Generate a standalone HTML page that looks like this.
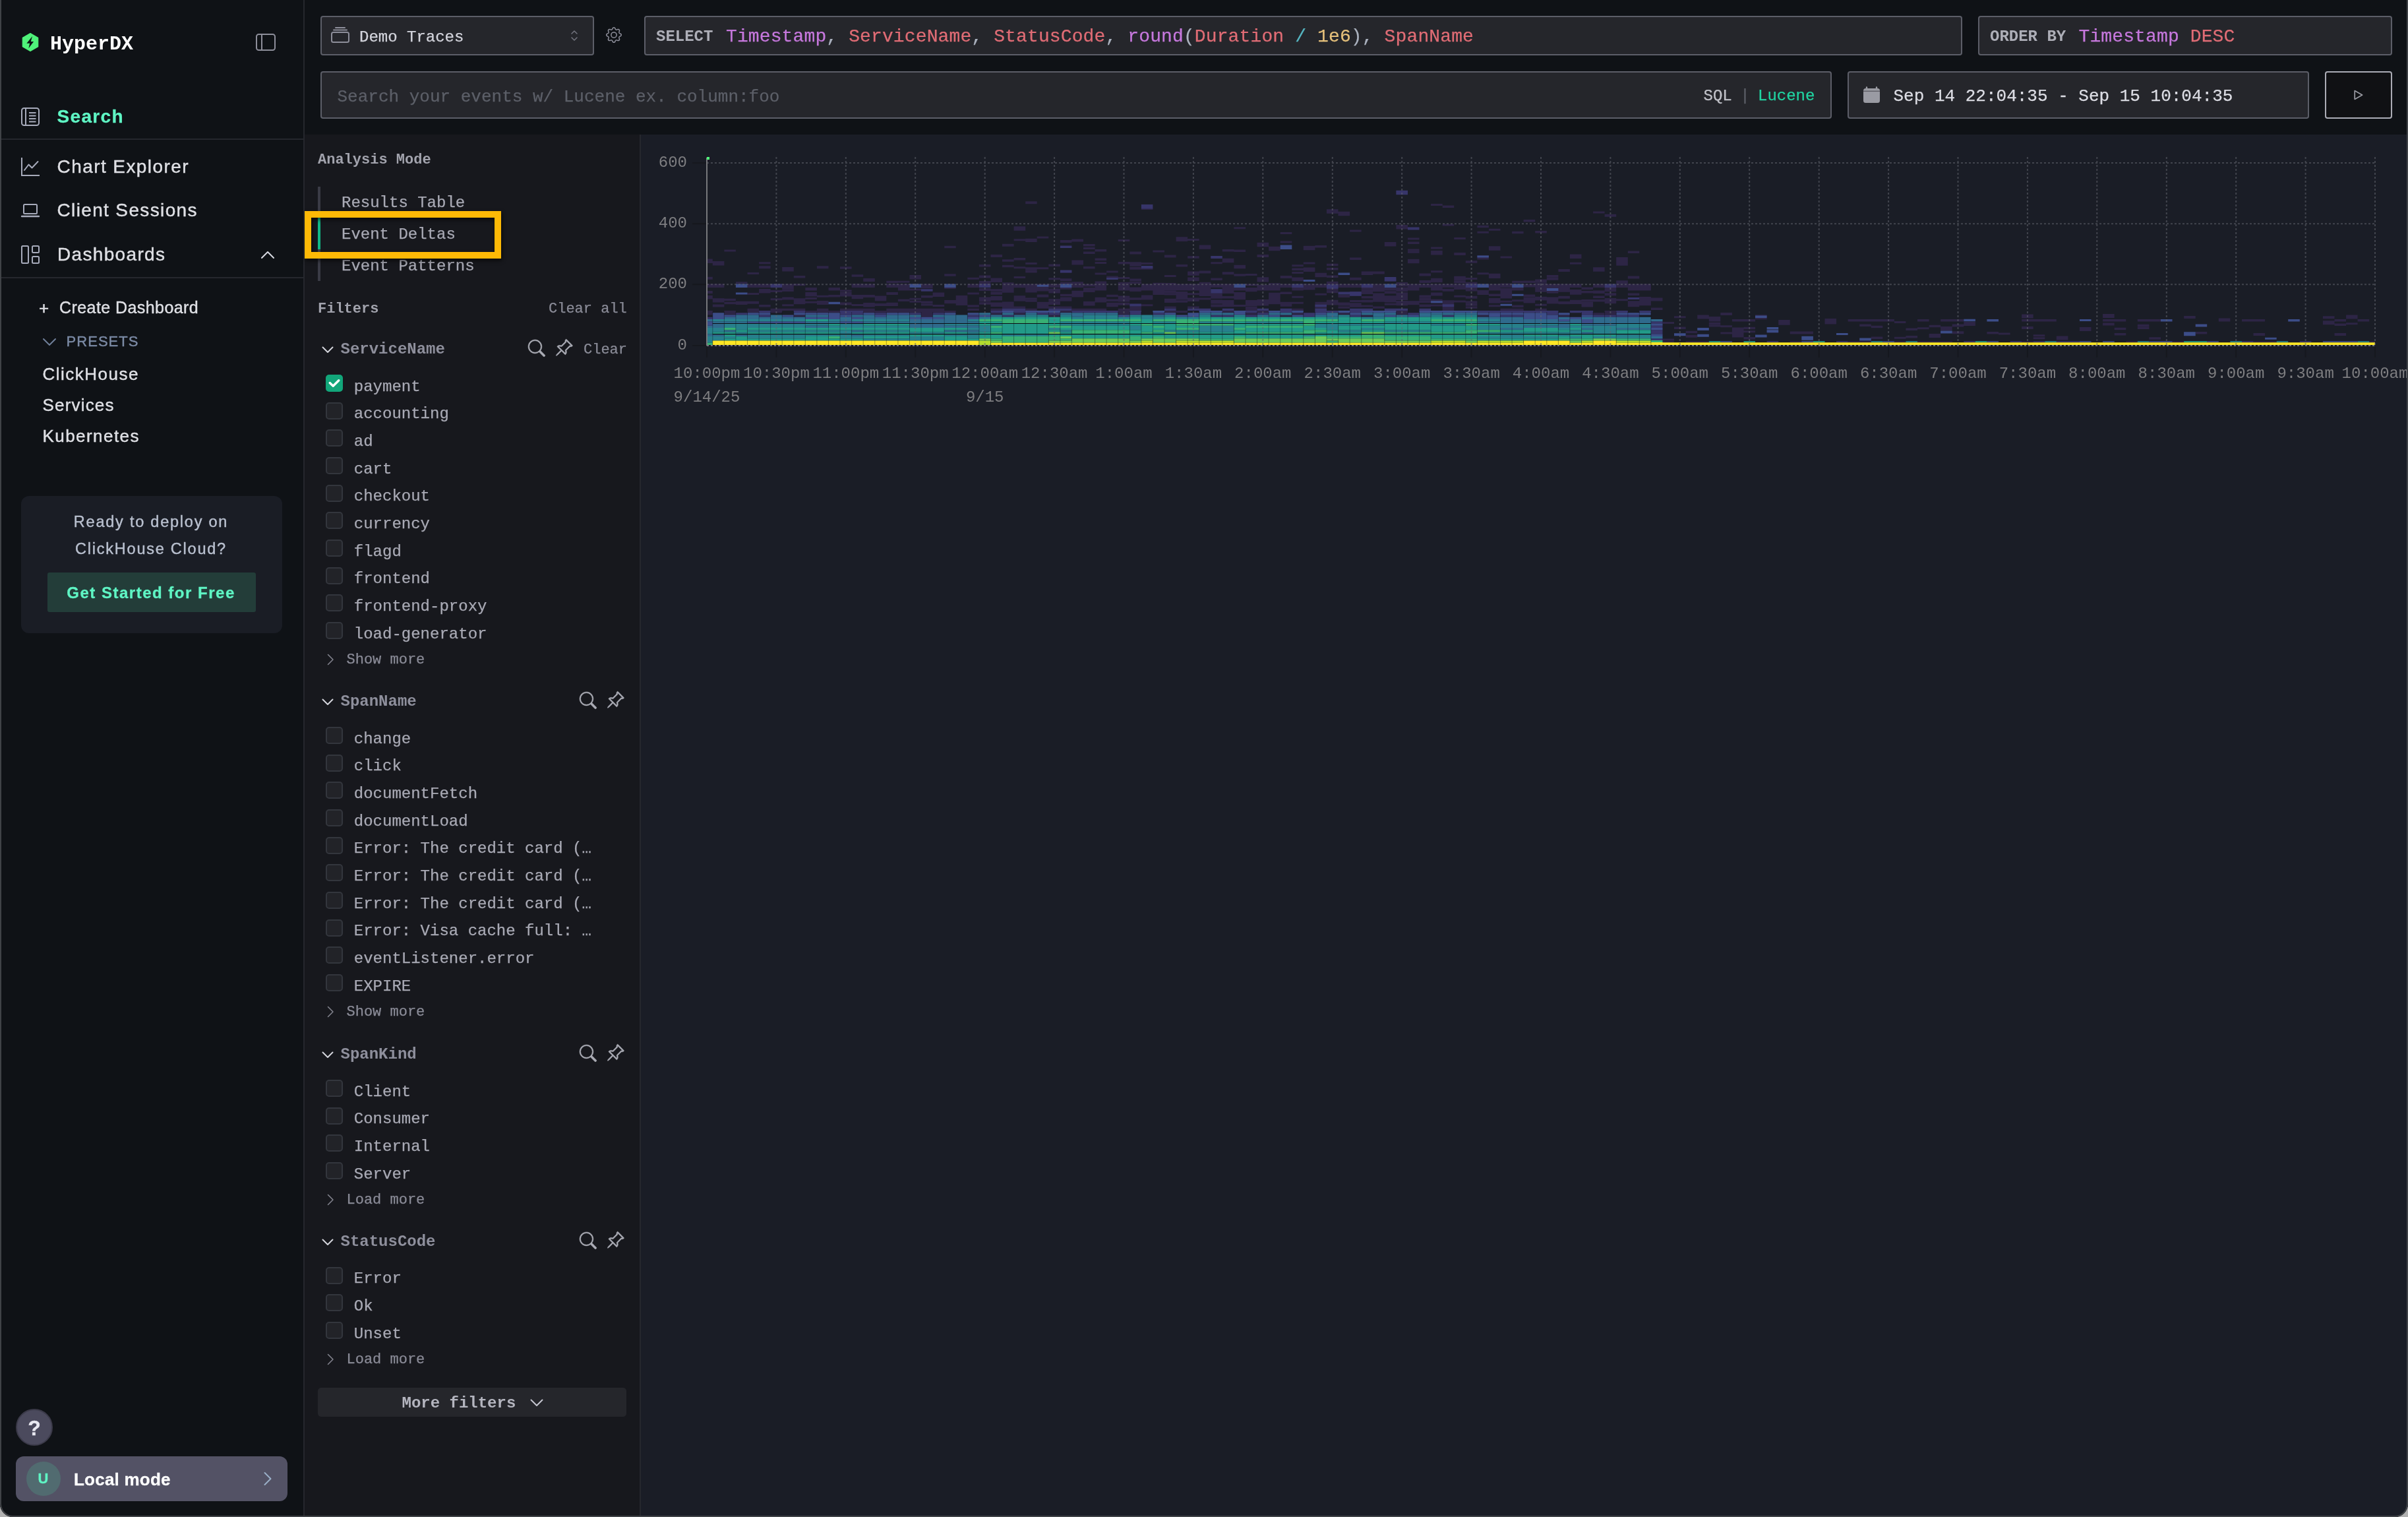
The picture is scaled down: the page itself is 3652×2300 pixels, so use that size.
<!DOCTYPE html><html lang="en"><head><meta charset="utf-8"><title>HyperDX Search</title><style>
*{box-sizing:border-box;margin:0;padding:0}
html,body{width:3652px;height:2300px;overflow:hidden;background:#b2b2b2}
#app{position:absolute;left:0;top:0;width:3652px;height:2300px;background:#1a1d26;overflow:hidden;border-radius:0 0 20px 20px}
#frame{position:absolute;left:0;top:-4px;width:3652px;height:2304px;border:2px solid #404347;border-bottom-width:2.5px;border-radius:0 0 20px 20px;pointer-events:none;z-index:50}
#app>div,#app>nav,#app>header,#app>aside,#app>main{position:absolute}
.t{position:absolute;white-space:pre}
.m{font-family:"Liberation Mono", monospace;-webkit-text-stroke:.25px currentColor}
.s{font-family:"Liberation Sans", sans-serif;-webkit-text-stroke:.4px currentColor}
.inp{background:#25262b;border:2px solid #5c5e68;border-radius:4px}
.cb{position:absolute;left:494px;width:26px;height:26px;border-radius:5px;background:#222328;border:2px solid #33363d}
.cb.on{background:#12a67a;border-color:#12a67a}
svg{overflow:visible}
.ly{position:absolute;left:0;top:0;width:10px;height:10px;will-change:transform}
</style></head><body><div id="app"><nav style="left:0;top:0;width:462px;height:2300px;background:#0f1216;border-right:2px solid #25272d"><div class="ly"><svg style="position:absolute;left:33px;top:50px;" width="26" height="28" viewBox="0 0 26 28"><path d="M13 0.6 L24.7 7.3 V20.7 L13 27.4 L1.3 20.7 V7.3 Z" fill="#4ff27a" stroke="#4ff27a" stroke-width="1.2" stroke-linejoin="round"/><path d="M16 4.9 L7.4 15.7 H12.1 L10.4 23.2 L18.1 13 H13.8 Z" fill="#0f1216"/></svg><span class="t m" style="top:51.52px;font-size:30px;line-height:30px;color:#ffffff;left:76.00px;font-weight:700;-webkit-text-stroke:0;">HyperDX</span><svg style="position:absolute;left:388px;top:51px;" width="30" height="26" viewBox="0 0 30 26"><rect x="1" y="1" width="28" height="24" rx="3.5" fill="none" stroke="#8d8e9a" stroke-width="2"/><path d="M9 1V25" stroke="#8d8e9a" stroke-width="2"/></svg><svg style="position:absolute;left:32px;top:163px;" width="28" height="28" viewBox="0 0 28 28"><rect x="1" y="1" width="26" height="26" rx="3.5" fill="none" stroke="#a7abbb" stroke-width="2"/><path d="M7 1V27 M12 8H22.5 M12 12.5H22.5 M12 17H22.5 M12 21.5H22.5" stroke="#a7abbb" stroke-width="2" fill="none"/></svg><span class="t s" style="top:163.30px;font-size:28px;line-height:28px;color:#5ff5c4;left:86.50px;font-weight:700;-webkit-text-stroke:.3px currentColor;letter-spacing:1.319px;">Search</span><div style="position:absolute;left:0px;top:210px;width:460px;height:2px;background:#25272d"></div><svg style="position:absolute;left:32px;top:239px;" width="28" height="28" viewBox="0 0 28 28"><path d="M1 0V27H28" stroke="#a7abbb" stroke-width="2" fill="none"/><path d="M5 19 L11.5 10.5 L16.5 15.5 L25.5 6" stroke="#a7abbb" stroke-width="2" fill="none" stroke-linejoin="round" stroke-linecap="round"/></svg><span class="t s" style="top:239.30px;font-size:28px;line-height:28px;color:#dfe0e5;left:86.50px;letter-spacing:1.422px;">Chart Explorer</span><svg style="position:absolute;left:32px;top:305px;" width="28" height="28" viewBox="0 0 28 28"><rect x="4" y="5" width="20" height="14" rx="1.5" fill="none" stroke="#a7abbb" stroke-width="2"/><path d="M1 23H27" stroke="#a7abbb" stroke-width="2.4" stroke-linecap="round"/></svg><span class="t s" style="top:305.30px;font-size:28px;line-height:28px;color:#dfe0e5;left:86.50px;letter-spacing:1.358px;">Client Sessions</span><svg style="position:absolute;left:32px;top:372px;" width="28" height="28" viewBox="0 0 28 28"><rect x="1" y="1" width="10" height="26" rx="1.5" fill="none" stroke="#a7abbb" stroke-width="2"/><rect x="17" y="1" width="10" height="10" rx="1.5" fill="none" stroke="#a7abbb" stroke-width="2"/><rect x="17" y="17" width="10" height="10" rx="1.5" fill="none" stroke="#a7abbb" stroke-width="2"/></svg><span class="t s" style="top:372.30px;font-size:28px;line-height:28px;color:#dfe0e5;left:87.00px;letter-spacing:1.335px;">Dashboards</span><svg style="position:absolute;left:396px;top:380px;" width="20" height="12" viewBox="0 0 20 12"><path d="M1 11 L10 2 L19 11" stroke="#d8dae2" stroke-width="2" fill="none" stroke-linecap="round" stroke-linejoin="round"/></svg><div style="position:absolute;left:0px;top:420px;width:460px;height:2px;background:#25272d"></div><span class="t s" style="top:453.99px;font-size:26px;line-height:26px;color:#dfe0e5;left:59.00px;">+</span><span class="t s" style="top:453.83px;font-size:25px;line-height:25px;color:#dfe0e5;left:90.00px;letter-spacing:0.430px;">Create Dashboard</span><svg style="position:absolute;left:65px;top:513px;" width="20" height="12" viewBox="0 0 20 12"><path d="M1 1 L10 10 L19 1" stroke="#6f7f99" stroke-width="2" fill="none" stroke-linecap="round" stroke-linejoin="round"/></svg><span class="t s" style="top:507.37px;font-size:22px;line-height:22px;color:#7c8ba6;left:100.50px;letter-spacing:1.049px;">PRESETS</span><span class="t s" style="top:553.99px;font-size:26px;line-height:26px;color:#dfe0e5;left:64.50px;letter-spacing:1.500px;">ClickHouse</span><span class="t s" style="top:600.99px;font-size:26px;line-height:26px;color:#dfe0e5;left:64.50px;letter-spacing:1.185px;">Services</span><span class="t s" style="top:648.49px;font-size:26px;line-height:26px;color:#dfe0e5;left:64.50px;letter-spacing:1.446px;">Kubernetes</span><div style="position:absolute;left:32px;top:752px;width:396px;height:208px;background:#1a1d25;border-radius:12px"></div><span class="t s" style="top:779.60px;font-size:23.5px;line-height:23.5px;color:#b9c0cf;left:229.00px;transform:translateX(-50%);letter-spacing:1.764px;">Ready to deploy on</span><span class="t s" style="top:821.10px;font-size:23.5px;line-height:23.5px;color:#b9c0cf;left:229.00px;transform:translateX(-50%);letter-spacing:1.760px;">ClickHouse Cloud?</span><div style="position:absolute;left:72px;top:868px;width:316px;height:60px;background:#233d39;border-radius:3px"></div><span class="t s" style="top:886.68px;font-size:24px;line-height:24px;color:#5ff5c4;left:229.00px;transform:translateX(-50%);font-weight:700;-webkit-text-stroke:.3px currentColor;letter-spacing:1.506px;">Get Started for Free</span><div style="position:absolute;left:24px;top:2136px;width:56px;height:56px;background:#4b4a5d;border-radius:50%;border:2px solid #3b3a49"></div><span class="t s" style="top:2148.91px;font-size:32px;line-height:32px;color:#e8e8f0;left:52.00px;transform:translateX(-50%);font-weight:700;-webkit-text-stroke:.3px currentColor;">?</span><div style="position:absolute;left:24px;top:2208px;width:412px;height:68px;background:#535265;border-radius:12px"></div><div style="position:absolute;left:39.5px;top:2216px;width:52px;height:52px;background:#516b70;border-radius:50%"></div><span class="t s" style="top:2231.37px;font-size:22px;line-height:22px;color:#5ff5c4;left:65.50px;transform:translateX(-50%);font-weight:700;-webkit-text-stroke:.3px currentColor;">U</span><span class="t s" style="top:2229.99px;font-size:26px;line-height:26px;color:#ffffff;left:112.00px;font-weight:700;-webkit-text-stroke:.3px currentColor;letter-spacing:0.224px;">Local mode</span><svg style="position:absolute;left:400px;top:2232px;" width="12" height="20" viewBox="0 0 12 20"><path d="M1.5 1 L10.5 10 L1.5 19" stroke="#9bb0c8" stroke-width="2" fill="none" stroke-linecap="round" stroke-linejoin="round"/></svg></div></nav><header style="left:462px;top:0;width:3190px;height:204px;background:#0f1216"><div class="ly" style="left:-462px;top:0"><div class="inp" style="position:absolute;left:486px;top:24px;width:415px;height:60px;"></div><svg style="position:absolute;left:502px;top:41px;" width="28" height="24" viewBox="0 0 28 24"><rect x="1" y="8" width="26" height="15" rx="2.5" fill="none" stroke="#8d8e9a" stroke-width="2"/><path d="M4 4.5H24 M7 1H21" stroke="#8d8e9a" stroke-width="2" stroke-linecap="round"/></svg><span class="t m" style="top:45.12px;font-size:24px;line-height:24px;color:#d3d4dc;left:545.00px;">Demo Traces</span><svg style="position:absolute;left:865px;top:45px;" width="12" height="18" viewBox="0 0 12 18"><path d="M2 6 L6 2 L10 6 M2 12 L6 16 L10 12" stroke="#73757f" stroke-width="1.5" fill="none" stroke-linecap="round" stroke-linejoin="round"/></svg><svg style="position:absolute;left:919px;top:40.5px;" width="24" height="24" viewBox="0 0 16 16"><g fill="#8d8e9a"><path d="M8 4.754a3.246 3.246 0 1 0 0 6.492 3.246 3.246 0 0 0 0-6.492zM5.754 8a2.246 2.246 0 1 1 4.492 0 2.246 2.246 0 0 1-4.492 0z"/><path d="M9.796 1.343c-.527-1.79-3.065-1.79-3.592 0l-.094.319a.873.873 0 0 1-1.255.52l-.292-.16c-1.64-.892-3.433.902-2.54 2.541l.159.292a.873.873 0 0 1-.52 1.255l-.319.094c-1.79.527-1.79 3.065 0 3.592l.319.094a.873.873 0 0 1 .52 1.255l-.16.292c-.892 1.64.901 3.434 2.541 2.54l.292-.159a.873.873 0 0 1 1.255.52l.094.319c.527 1.79 3.065 1.79 3.592 0l.094-.319a.873.873 0 0 1 1.255-.52l.292.16c1.64.893 3.434-.902 2.54-2.541l-.159-.292a.873.873 0 0 1 .52-1.255l.319-.094c1.79-.527 1.79-3.065 0-3.592l-.319-.094a.873.873 0 0 1-.52-1.255l.16-.292c.893-1.64-.902-3.433-2.541-2.54l-.292.159a.873.873 0 0 1-1.255-.52l-.094-.319zm-2.633.283c.246-.835 1.428-.835 1.674 0l.094.319a1.873 1.873 0 0 0 2.693 1.115l.291-.16c.764-.415 1.6.42 1.184 1.185l-.159.292a1.873 1.873 0 0 0 1.116 2.692l.318.094c.835.246.835 1.428 0 1.674l-.319.094a1.873 1.873 0 0 0-1.115 2.693l.16.291c.415.764-.42 1.6-1.185 1.184l-.291-.159a1.873 1.873 0 0 0-2.693 1.116l-.094.318c-.246.835-1.428.835-1.674 0l-.094-.319a1.873 1.873 0 0 0-2.692-1.115l-.292.16c-.764.415-1.6-.42-1.184-1.185l.159-.291A1.873 1.873 0 0 0 1.945 8.93l-.319-.094c-.835-.246-.835-1.428 0-1.674l.319-.094A1.873 1.873 0 0 0 3.06 4.377l-.16-.292c-.415-.764.42-1.6 1.185-1.184l.292.159a1.873 1.873 0 0 0 2.692-1.115l.094-.319z"/></g></svg><div class="inp" style="position:absolute;left:977px;top:24px;width:1999px;height:60px;"></div><span class="t m" style="top:44.12px;font-size:24px;line-height:24px;color:#adaeb7;left:995.00px;font-weight:700;-webkit-text-stroke:0;">SELECT</span><span class="t m" style="top:41.55px;font-size:28px;line-height:28px;color:#abb2bf;left:1101.00px;letter-spacing:0.120px;"><span style="color:#c678dd">Timestamp</span>, <span style="color:#e06c75">ServiceName</span>, <span style="color:#e06c75">StatusCode</span>, <span style="color:#c678dd">round</span>(<span style="color:#e06c75">Duration</span> <span style="color:#56b6c2">/</span> <span style="color:#e5c07b">1e6</span>), <span style="color:#e06c75">SpanName</span></span><div class="inp" style="position:absolute;left:3000px;top:24px;width:628px;height:60px;"></div><span class="t m" style="top:44.12px;font-size:24px;line-height:24px;color:#adaeb7;left:3018.00px;font-weight:700;-webkit-text-stroke:0;">ORDER BY</span><span class="t m" style="top:41.55px;font-size:28px;line-height:28px;color:#abb2bf;left:3152.50px;letter-spacing:0.120px;"><span style="color:#c678dd">Timestamp</span> <span style="color:#e06c75">DESC</span></span><div class="inp" style="position:absolute;left:486px;top:108px;width:2292px;height:71.5px;"></div><span class="t m" style="top:133.58px;font-size:26px;line-height:26px;color:#5c5f68;left:511.50px;">Search your events w/ Lucene ex. column:foo</span><span class="t m" style="top:134.12px;font-size:24px;line-height:24px;color:#c1c2c9;left:2583.50px;">SQL</span><span class="t m" style="top:134.12px;font-size:24px;line-height:24px;color:#5c5f68;left:2646.50px;transform:translateX(-50%);">|</span><span class="t m" style="top:134.12px;font-size:24px;line-height:24px;color:#20d4a1;left:2666.00px;">Lucene</span><div class="inp" style="position:absolute;left:2802px;top:108px;width:700px;height:71.5px;"></div><svg style="position:absolute;left:2825.5px;top:131.5px;" width="25" height="24" viewBox="0 0 25 24"><path d="M5 0.5V4 M20 0.5V4" stroke="#9a9ba3" stroke-width="2.4" stroke-linecap="round"/><rect x="0" y="2" width="25" height="22" rx="3.5" fill="#9a9ba3"/><rect x="0" y="5.6" width="25" height="1.3" fill="#25262b" opacity=".55"/></svg><span class="t m" style="top:132.58px;font-size:26px;line-height:26px;color:#dcdde4;left:2871.50px;">Sep 14 22:04:35 - Sep 15 10:04:35</span><div style="position:absolute;left:3526px;top:108px;width:102px;height:71.5px;background:#101114;border:2px solid #abacb6;border-radius:4px"></div><svg style="position:absolute;left:3570px;top:136px;" width="14" height="16" viewBox="0 0 14 16"><path d="M1.2 1.6 L12.6 8 L1.2 14.4 Z" fill="none" stroke="#9a9ba3" stroke-width="1.7" stroke-linejoin="round"/></svg></div></header><aside style="left:462px;top:204px;width:510px;height:2096px;background:#17181d;border-right:2px solid #26272d"><div class="ly" style="left:-462px;top:-204px"><span class="t m" style="top:231.65px;font-size:22px;line-height:22px;color:#a2a3ad;left:482.00px;font-weight:700;-webkit-text-stroke:0;">Analysis Mode</span><div style="position:absolute;left:482px;top:282.5px;width:4px;height:143.5px;background:#3a3b46"></div><span class="t m" style="top:295.62px;font-size:24px;line-height:24px;color:#a9aab5;left:518.00px;">Results Table</span><span class="t m" style="top:343.62px;font-size:24px;line-height:24px;color:#a9aab5;left:518.00px;">Event Deltas</span><span class="t m" style="top:391.62px;font-size:24px;line-height:24px;color:#a9aab5;left:518.00px;">Event Patterns</span><div style="position:absolute;left:482px;top:328px;width:4px;height:50px;background:#12b886"></div><div style="position:absolute;left:462px;top:320px;width:298px;height:71.5px;border:10px solid #fdb906;filter:drop-shadow(1px 3px 3px rgba(0,0,0,.65));z-index:5"></div><span class="t m" style="top:458.15px;font-size:22px;line-height:22px;color:#a2a3ad;left:482.00px;font-weight:700;-webkit-text-stroke:0;">Filters</span><span class="t m" style="top:458.15px;font-size:22px;line-height:22px;color:#8a8b97;left:832.00px;">Clear all</span><svg style="position:absolute;left:488px;top:525.0px;" width="18" height="11" viewBox="0 0 18 11"><path d="M1.5 1.5 L9 9 L16.5 1.5" stroke="#d4d5dc" stroke-width="2" fill="none" stroke-linecap="round" stroke-linejoin="round"/></svg><span class="t m" style="top:518.12px;font-size:24px;line-height:24px;color:#8e8f9c;left:516.50px;font-weight:700;-webkit-text-stroke:0;">ServiceName</span><svg style="position:absolute;left:801.2px;top:515.0px;" width="25.7" height="25.7" viewBox="0 0 16 16"><g fill="#abacb5" stroke="#abacb5" stroke-width=".35"><path d="M11.742 10.344a6.5 6.5 0 1 0-1.397 1.398h-.001c.03.04.062.078.098.115l3.85 3.85a1 1 0 0 0 1.415-1.414l-3.85-3.85a1.007 1.007 0 0 0-.115-.1zM12 6.5a5.5 5.5 0 1 1-11 0 5.5 5.5 0 0 1 11 0z"/></g></svg><svg style="position:absolute;left:840.6px;top:513.0px;" width="28.7" height="28.7" viewBox="0 0 16 16"><g fill="#abacb5" stroke="#abacb5" stroke-width=".3"><path d="M9.828.722a.5.5 0 0 1 .354.146l4.95 4.95a.5.5 0 0 1 0 .707c-.48.48-1.072.588-1.503.588-.177 0-.335-.018-.46-.039l-3.134 3.134a5.927 5.927 0 0 1 .16 1.013c.046.702-.032 1.687-.72 2.375a.5.5 0 0 1-.707 0l-2.829-2.828-3.182 3.182c-.195.195-1.219.902-1.414.707-.195-.195.512-1.22.707-1.414l3.182-3.182-2.828-2.829a.5.5 0 0 1 0-.707c.688-.688 1.673-.767 2.375-.72a5.922 5.922 0 0 1 1.013.16l3.134-3.133a2.772 2.772 0 0 1-.04-.461c0-.43.108-1.022.589-1.503a.5.5 0 0 1 .353-.146zm.122 2.112v-.002.002zm0-.002v.002a.5.5 0 0 1-.122.51L6.293 6.878a.5.5 0 0 1-.511.12H5.78l-.014-.004a4.507 4.507 0 0 0-.288-.076 4.922 4.922 0 0 0-.765-.116c-.422-.028-.836.008-1.175.15l5.51 5.509c.141-.34.177-.753.149-1.175a4.924 4.924 0 0 0-.192-1.054l-.004-.013v-.001a.5.5 0 0 1 .12-.512l3.536-3.535a.5.5 0 0 1 .532-.115l.096.022c.087.017.208.034.344.034.114 0 .23-.011.343-.04L9.927 2.028c-.029.113-.04.23-.04.343a1.779 1.779 0 0 0 .062.46z"/></g></svg><span class="t m" style="top:519.65px;font-size:22px;line-height:22px;color:#8a8b97;left:885.00px;">Clear</span><div class="cb on" style="top:568.00px"><svg width="26" height="26" viewBox="0 0 26 26" style="position:absolute;left:-2px;top:-2px"><path d="M6.2 12.6 L11.2 17.3 L19.8 8.7" stroke="#fff" stroke-width="3.4" fill="none" stroke-linecap="round" stroke-linejoin="round"/></svg></div><span class="t m" style="top:574.62px;font-size:24px;line-height:24px;color:#a9aab5;left:536.80px;">payment</span><div class="cb" style="top:609.67px"></div><span class="t m" style="top:616.29px;font-size:24px;line-height:24px;color:#a9aab5;left:536.80px;">accounting</span><div class="cb" style="top:651.34px"></div><span class="t m" style="top:657.96px;font-size:24px;line-height:24px;color:#a9aab5;left:536.80px;">ad</span><div class="cb" style="top:693.01px"></div><span class="t m" style="top:699.63px;font-size:24px;line-height:24px;color:#a9aab5;left:536.80px;">cart</span><div class="cb" style="top:734.68px"></div><span class="t m" style="top:741.30px;font-size:24px;line-height:24px;color:#a9aab5;left:536.80px;">checkout</span><div class="cb" style="top:776.35px"></div><span class="t m" style="top:782.97px;font-size:24px;line-height:24px;color:#a9aab5;left:536.80px;">currency</span><div class="cb" style="top:818.02px"></div><span class="t m" style="top:824.64px;font-size:24px;line-height:24px;color:#a9aab5;left:536.80px;">flagd</span><div class="cb" style="top:859.69px"></div><span class="t m" style="top:866.31px;font-size:24px;line-height:24px;color:#a9aab5;left:536.80px;">frontend</span><div class="cb" style="top:901.36px"></div><span class="t m" style="top:907.98px;font-size:24px;line-height:24px;color:#a9aab5;left:536.80px;">frontend-proxy</span><div class="cb" style="top:943.03px"></div><span class="t m" style="top:949.65px;font-size:24px;line-height:24px;color:#a9aab5;left:536.80px;">load-generator</span><svg style="position:absolute;left:496px;top:991.03px;" width="11" height="18" viewBox="0 0 11 18"><path d="M1.5 1.5 L9 9 L1.5 16.5" stroke="#84858f" stroke-width="1.5" fill="none" stroke-linecap="round" stroke-linejoin="round"/></svg><span class="t m" style="top:990.18px;font-size:22px;line-height:22px;color:#8a8b97;left:525.50px;">Show more</span><svg style="position:absolute;left:488px;top:1059.0px;" width="18" height="11" viewBox="0 0 18 11"><path d="M1.5 1.5 L9 9 L16.5 1.5" stroke="#d4d5dc" stroke-width="2" fill="none" stroke-linecap="round" stroke-linejoin="round"/></svg><span class="t m" style="top:1052.12px;font-size:24px;line-height:24px;color:#8e8f9c;left:516.50px;font-weight:700;-webkit-text-stroke:0;">SpanName</span><svg style="position:absolute;left:879.2px;top:1049.0px;" width="25.7" height="25.7" viewBox="0 0 16 16"><g fill="#abacb5" stroke="#abacb5" stroke-width=".35"><path d="M11.742 10.344a6.5 6.5 0 1 0-1.397 1.398h-.001c.03.04.062.078.098.115l3.85 3.85a1 1 0 0 0 1.415-1.414l-3.85-3.85a1.007 1.007 0 0 0-.115-.1zM12 6.5a5.5 5.5 0 1 1-11 0 5.5 5.5 0 0 1 11 0z"/></g></svg><svg style="position:absolute;left:918.6px;top:1047.0px;" width="28.7" height="28.7" viewBox="0 0 16 16"><g fill="#abacb5" stroke="#abacb5" stroke-width=".3"><path d="M9.828.722a.5.5 0 0 1 .354.146l4.95 4.95a.5.5 0 0 1 0 .707c-.48.48-1.072.588-1.503.588-.177 0-.335-.018-.46-.039l-3.134 3.134a5.927 5.927 0 0 1 .16 1.013c.046.702-.032 1.687-.72 2.375a.5.5 0 0 1-.707 0l-2.829-2.828-3.182 3.182c-.195.195-1.219.902-1.414.707-.195-.195.512-1.22.707-1.414l3.182-3.182-2.828-2.829a.5.5 0 0 1 0-.707c.688-.688 1.673-.767 2.375-.72a5.922 5.922 0 0 1 1.013.16l3.134-3.133a2.772 2.772 0 0 1-.04-.461c0-.43.108-1.022.589-1.503a.5.5 0 0 1 .353-.146zm.122 2.112v-.002.002zm0-.002v.002a.5.5 0 0 1-.122.51L6.293 6.878a.5.5 0 0 1-.511.12H5.78l-.014-.004a4.507 4.507 0 0 0-.288-.076 4.922 4.922 0 0 0-.765-.116c-.422-.028-.836.008-1.175.15l5.51 5.509c.141-.34.177-.753.149-1.175a4.924 4.924 0 0 0-.192-1.054l-.004-.013v-.001a.5.5 0 0 1 .12-.512l3.536-3.535a.5.5 0 0 1 .532-.115l.096.022c.087.017.208.034.344.034.114 0 .23-.011.343-.04L9.927 2.028c-.029.113-.04.23-.04.343a1.779 1.779 0 0 0 .062.46z"/></g></svg><div class="cb" style="top:1102.00px"></div><span class="t m" style="top:1108.62px;font-size:24px;line-height:24px;color:#a9aab5;left:536.80px;">change</span><div class="cb" style="top:1143.67px"></div><span class="t m" style="top:1150.29px;font-size:24px;line-height:24px;color:#a9aab5;left:536.80px;">click</span><div class="cb" style="top:1185.34px"></div><span class="t m" style="top:1191.96px;font-size:24px;line-height:24px;color:#a9aab5;left:536.80px;">documentFetch</span><div class="cb" style="top:1227.01px"></div><span class="t m" style="top:1233.63px;font-size:24px;line-height:24px;color:#a9aab5;left:536.80px;">documentLoad</span><div class="cb" style="top:1268.68px"></div><span class="t m" style="top:1275.30px;font-size:24px;line-height:24px;color:#a9aab5;left:536.80px;">Error: The credit card (…</span><div class="cb" style="top:1310.35px"></div><span class="t m" style="top:1316.97px;font-size:24px;line-height:24px;color:#a9aab5;left:536.80px;">Error: The credit card (…</span><div class="cb" style="top:1352.02px"></div><span class="t m" style="top:1358.64px;font-size:24px;line-height:24px;color:#a9aab5;left:536.80px;">Error: The credit card (…</span><div class="cb" style="top:1393.69px"></div><span class="t m" style="top:1400.31px;font-size:24px;line-height:24px;color:#a9aab5;left:536.80px;">Error: Visa cache full: …</span><div class="cb" style="top:1435.36px"></div><span class="t m" style="top:1441.98px;font-size:24px;line-height:24px;color:#a9aab5;left:536.80px;">eventListener.error</span><div class="cb" style="top:1477.03px"></div><span class="t m" style="top:1483.65px;font-size:24px;line-height:24px;color:#a9aab5;left:536.80px;">EXPIRE</span><svg style="position:absolute;left:496px;top:1525.03px;" width="11" height="18" viewBox="0 0 11 18"><path d="M1.5 1.5 L9 9 L1.5 16.5" stroke="#84858f" stroke-width="1.5" fill="none" stroke-linecap="round" stroke-linejoin="round"/></svg><span class="t m" style="top:1524.18px;font-size:22px;line-height:22px;color:#8a8b97;left:525.50px;">Show more</span><svg style="position:absolute;left:488px;top:1594.0px;" width="18" height="11" viewBox="0 0 18 11"><path d="M1.5 1.5 L9 9 L16.5 1.5" stroke="#d4d5dc" stroke-width="2" fill="none" stroke-linecap="round" stroke-linejoin="round"/></svg><span class="t m" style="top:1587.12px;font-size:24px;line-height:24px;color:#8e8f9c;left:516.50px;font-weight:700;-webkit-text-stroke:0;">SpanKind</span><svg style="position:absolute;left:879.2px;top:1584.0px;" width="25.7" height="25.7" viewBox="0 0 16 16"><g fill="#abacb5" stroke="#abacb5" stroke-width=".35"><path d="M11.742 10.344a6.5 6.5 0 1 0-1.397 1.398h-.001c.03.04.062.078.098.115l3.85 3.85a1 1 0 0 0 1.415-1.414l-3.85-3.85a1.007 1.007 0 0 0-.115-.1zM12 6.5a5.5 5.5 0 1 1-11 0 5.5 5.5 0 0 1 11 0z"/></g></svg><svg style="position:absolute;left:918.6px;top:1582.0px;" width="28.7" height="28.7" viewBox="0 0 16 16"><g fill="#abacb5" stroke="#abacb5" stroke-width=".3"><path d="M9.828.722a.5.5 0 0 1 .354.146l4.95 4.95a.5.5 0 0 1 0 .707c-.48.48-1.072.588-1.503.588-.177 0-.335-.018-.46-.039l-3.134 3.134a5.927 5.927 0 0 1 .16 1.013c.046.702-.032 1.687-.72 2.375a.5.5 0 0 1-.707 0l-2.829-2.828-3.182 3.182c-.195.195-1.219.902-1.414.707-.195-.195.512-1.22.707-1.414l3.182-3.182-2.828-2.829a.5.5 0 0 1 0-.707c.688-.688 1.673-.767 2.375-.72a5.922 5.922 0 0 1 1.013.16l3.134-3.133a2.772 2.772 0 0 1-.04-.461c0-.43.108-1.022.589-1.503a.5.5 0 0 1 .353-.146zm.122 2.112v-.002.002zm0-.002v.002a.5.5 0 0 1-.122.51L6.293 6.878a.5.5 0 0 1-.511.12H5.78l-.014-.004a4.507 4.507 0 0 0-.288-.076 4.922 4.922 0 0 0-.765-.116c-.422-.028-.836.008-1.175.15l5.51 5.509c.141-.34.177-.753.149-1.175a4.924 4.924 0 0 0-.192-1.054l-.004-.013v-.001a.5.5 0 0 1 .12-.512l3.536-3.535a.5.5 0 0 1 .532-.115l.096.022c.087.017.208.034.344.034.114 0 .23-.011.343-.04L9.927 2.028c-.029.113-.04.23-.04.343a1.779 1.779 0 0 0 .062.46z"/></g></svg><div class="cb" style="top:1637.00px"></div><span class="t m" style="top:1643.62px;font-size:24px;line-height:24px;color:#a9aab5;left:536.80px;">Client</span><div class="cb" style="top:1678.67px"></div><span class="t m" style="top:1685.29px;font-size:24px;line-height:24px;color:#a9aab5;left:536.80px;">Consumer</span><div class="cb" style="top:1720.34px"></div><span class="t m" style="top:1726.96px;font-size:24px;line-height:24px;color:#a9aab5;left:536.80px;">Internal</span><div class="cb" style="top:1762.01px"></div><span class="t m" style="top:1768.63px;font-size:24px;line-height:24px;color:#a9aab5;left:536.80px;">Server</span><svg style="position:absolute;left:496px;top:1810.01px;" width="11" height="18" viewBox="0 0 11 18"><path d="M1.5 1.5 L9 9 L1.5 16.5" stroke="#84858f" stroke-width="1.5" fill="none" stroke-linecap="round" stroke-linejoin="round"/></svg><span class="t m" style="top:1809.16px;font-size:22px;line-height:22px;color:#8a8b97;left:525.50px;">Load more</span><svg style="position:absolute;left:488px;top:1877.8px;" width="18" height="11" viewBox="0 0 18 11"><path d="M1.5 1.5 L9 9 L16.5 1.5" stroke="#d4d5dc" stroke-width="2" fill="none" stroke-linecap="round" stroke-linejoin="round"/></svg><span class="t m" style="top:1870.92px;font-size:24px;line-height:24px;color:#8e8f9c;left:516.50px;font-weight:700;-webkit-text-stroke:0;">StatusCode</span><svg style="position:absolute;left:879.2px;top:1867.8px;" width="25.7" height="25.7" viewBox="0 0 16 16"><g fill="#abacb5" stroke="#abacb5" stroke-width=".35"><path d="M11.742 10.344a6.5 6.5 0 1 0-1.397 1.398h-.001c.03.04.062.078.098.115l3.85 3.85a1 1 0 0 0 1.415-1.414l-3.85-3.85a1.007 1.007 0 0 0-.115-.1zM12 6.5a5.5 5.5 0 1 1-11 0 5.5 5.5 0 0 1 11 0z"/></g></svg><svg style="position:absolute;left:918.6px;top:1865.8px;" width="28.7" height="28.7" viewBox="0 0 16 16"><g fill="#abacb5" stroke="#abacb5" stroke-width=".3"><path d="M9.828.722a.5.5 0 0 1 .354.146l4.95 4.95a.5.5 0 0 1 0 .707c-.48.48-1.072.588-1.503.588-.177 0-.335-.018-.46-.039l-3.134 3.134a5.927 5.927 0 0 1 .16 1.013c.046.702-.032 1.687-.72 2.375a.5.5 0 0 1-.707 0l-2.829-2.828-3.182 3.182c-.195.195-1.219.902-1.414.707-.195-.195.512-1.22.707-1.414l3.182-3.182-2.828-2.829a.5.5 0 0 1 0-.707c.688-.688 1.673-.767 2.375-.72a5.922 5.922 0 0 1 1.013.16l3.134-3.133a2.772 2.772 0 0 1-.04-.461c0-.43.108-1.022.589-1.503a.5.5 0 0 1 .353-.146zm.122 2.112v-.002.002zm0-.002v.002a.5.5 0 0 1-.122.51L6.293 6.878a.5.5 0 0 1-.511.12H5.78l-.014-.004a4.507 4.507 0 0 0-.288-.076 4.922 4.922 0 0 0-.765-.116c-.422-.028-.836.008-1.175.15l5.51 5.509c.141-.34.177-.753.149-1.175a4.924 4.924 0 0 0-.192-1.054l-.004-.013v-.001a.5.5 0 0 1 .12-.512l3.536-3.535a.5.5 0 0 1 .532-.115l.096.022c.087.017.208.034.344.034.114 0 .23-.011.343-.04L9.927 2.028c-.029.113-.04.23-.04.343a1.779 1.779 0 0 0 .062.46z"/></g></svg><div class="cb" style="top:1920.80px"></div><span class="t m" style="top:1927.42px;font-size:24px;line-height:24px;color:#a9aab5;left:536.80px;">Error</span><div class="cb" style="top:1962.47px"></div><span class="t m" style="top:1969.09px;font-size:24px;line-height:24px;color:#a9aab5;left:536.80px;">Ok</span><div class="cb" style="top:2004.14px"></div><span class="t m" style="top:2010.76px;font-size:24px;line-height:24px;color:#a9aab5;left:536.80px;">Unset</span><svg style="position:absolute;left:496px;top:2052.14px;" width="11" height="18" viewBox="0 0 11 18"><path d="M1.5 1.5 L9 9 L1.5 16.5" stroke="#84858f" stroke-width="1.5" fill="none" stroke-linecap="round" stroke-linejoin="round"/></svg><span class="t m" style="top:2051.29px;font-size:22px;line-height:22px;color:#8a8b97;left:525.50px;">Load more</span><div style="position:absolute;left:482px;top:2104px;width:468px;height:44px;background:#25262b;border-radius:5px"></div><span class="t m" style="top:2116.12px;font-size:24px;line-height:24px;color:#b4b5bf;left:609.50px;font-weight:700;-webkit-text-stroke:0;">More filters</span><svg style="position:absolute;left:804px;top:2121px;" width="20" height="12" viewBox="0 0 20 12"><path d="M1.5 1.5 L10 10 L18.5 1.5" stroke="#c5c6d0" stroke-width="2" fill="none" stroke-linecap="round" stroke-linejoin="round"/></svg></div></aside><main style="left:972px;top:204px;width:2680px;height:2096px;background:#1a1d26"><svg style="position:absolute;left:0;top:0;will-change:transform" width="2680" height="500" viewBox="972 204 2680 500"><path fill="#2d2545" d="M1072.0 474.2H1080.8V477.5H1072.0zM1072.0 471.0H1080.8V474.2H1072.0zM1072.0 392.6H1080.8V399.1H1072.0zM1072.0 441.0H1080.8V445.0H1072.0zM1072.0 448.0H1080.8V451.0H1072.0zM1072.0 419.7H1080.8V423.7H1072.0zM1072.0 450.0H1080.8V453.5H1072.0zM1072.0 430.5H1080.8V436.0H1072.0zM1080.8 455.4H1098.4V458.4H1080.8zM1080.8 461.4H1098.4V465.4H1080.8zM1080.8 452.3H1098.4V455.8H1080.8zM1080.8 396.1H1098.4V402.6H1080.8zM1080.8 430.5H1098.4V436.0H1080.8zM1098.4 474.2H1115.9V477.5H1098.4zM1098.4 471.0H1115.9V474.2H1098.4zM1098.4 378.6H1115.9V381.6H1098.4zM1098.4 452.8H1115.9V456.3H1098.4zM1098.4 457.7H1115.9V461.2H1098.4zM1115.9 427.3H1133.5V430.3H1115.9zM1115.9 459.0H1133.5V462.0H1115.9zM1115.9 456.8H1133.5V460.8H1115.9zM1133.5 471.0H1151.1V474.2H1133.5zM1133.5 467.8H1151.1V471.0H1133.5zM1133.5 456.8H1151.1V460.8H1133.5zM1133.5 443.9H1151.1V446.9H1133.5zM1133.5 413.1H1151.1V416.1H1133.5zM1133.5 430.5H1151.1V436.0H1133.5zM1151.1 438.1H1168.6V444.6H1151.1zM1151.1 403.3H1168.6V407.3H1151.1zM1151.1 462.1H1168.6V465.6H1151.1zM1151.1 397.2H1168.6V400.2H1151.1zM1151.1 430.5H1168.6V436.0H1151.1zM1168.6 471.0H1186.2V474.2H1168.6zM1168.6 467.8H1186.2V471.0H1168.6zM1168.6 431.0H1186.2V434.5H1168.6zM1168.6 439.9H1186.2V442.9H1168.6zM1168.6 452.2H1186.2V455.2H1168.6zM1186.2 467.8H1203.8V471.0H1186.2zM1186.2 405.1H1203.8V411.6H1186.2zM1186.2 450.4H1203.8V454.4H1186.2zM1186.2 435.3H1203.8V438.3H1186.2zM1186.2 461.2H1203.8V464.2H1186.2zM1186.2 438.5H1203.8V442.0H1186.2zM1186.2 430.5H1203.8V436.0H1186.2zM1203.8 477.5H1221.3V480.8H1203.8zM1203.8 467.8H1221.3V471.0H1203.8zM1203.8 418.0H1221.3V421.5H1203.8zM1203.8 453.7H1221.3V460.2H1203.8zM1203.8 430.2H1221.3V433.2H1203.8zM1203.8 452.3H1221.3V456.3H1203.8zM1203.8 458.3H1221.3V461.3H1203.8zM1221.3 471.0H1238.9V474.2H1221.3zM1221.3 445.6H1238.9V449.1H1221.3zM1221.3 442.9H1238.9V449.4H1221.3zM1221.3 450.9H1238.9V453.9H1221.3zM1221.3 456.8H1238.9V459.8H1221.3zM1221.3 436.0H1238.9V440.5H1221.3zM1238.9 471.0H1256.5V474.2H1238.9zM1238.9 467.8H1256.5V471.0H1238.9zM1238.9 459.1H1256.5V462.1H1238.9zM1238.9 447.7H1256.5V450.7H1238.9zM1238.9 456.1H1256.5V459.6H1238.9zM1238.9 403.3H1256.5V407.3H1238.9zM1256.5 471.0H1274.0V474.2H1256.5zM1256.5 447.1H1274.0V450.6H1256.5zM1256.5 436.0H1274.0V440.5H1256.5zM1274.0 467.8H1291.6V471.0H1274.0zM1274.0 404.2H1291.6V407.7H1274.0zM1274.0 439.6H1291.6V442.6H1274.0zM1274.0 443.1H1291.6V449.6H1274.0zM1274.0 458.4H1291.6V462.4H1274.0zM1274.0 446.1H1291.6V449.6H1274.0zM1291.6 467.8H1309.2V471.0H1291.6zM1291.6 461.0H1309.2V464.0H1291.6zM1291.6 447.0H1309.2V450.5H1291.6zM1291.6 430.3H1309.2V433.8H1291.6zM1291.6 450.2H1309.2V453.2H1291.6zM1291.6 416.3H1309.2V419.8H1291.6zM1291.6 430.5H1309.2V436.0H1291.6zM1309.2 471.0H1326.8V474.2H1309.2zM1309.2 467.8H1326.8V471.0H1309.2zM1309.2 459.0H1326.8V465.5H1309.2zM1309.2 447.9H1326.8V450.9H1309.2zM1309.2 422.1H1326.8V426.1H1309.2zM1309.2 446.9H1326.8V450.9H1309.2zM1309.2 424.1H1326.8V427.1H1309.2zM1309.2 430.5H1326.8V436.0H1309.2zM1326.8 471.0H1344.3V474.2H1326.8zM1326.8 452.7H1344.3V456.2H1326.8zM1326.8 448.5H1344.3V455.0H1326.8zM1326.8 449.2H1344.3V455.7H1326.8zM1326.8 460.0H1344.3V464.0H1326.8zM1344.3 471.0H1361.9V474.2H1344.3zM1344.3 467.8H1361.9V471.0H1344.3zM1344.3 460.8H1361.9V463.8H1344.3zM1344.3 443.0H1361.9V447.0H1344.3zM1344.3 458.8H1361.9V461.8H1344.3zM1344.3 425.8H1361.9V429.3H1344.3zM1344.3 461.0H1361.9V464.0H1344.3zM1344.3 430.5H1361.9V436.0H1344.3zM1361.9 471.0H1379.5V474.2H1361.9zM1361.9 467.8H1379.5V471.0H1361.9zM1361.9 425.8H1379.5V428.8H1361.9zM1361.9 453.6H1379.5V457.1H1361.9zM1361.9 430.5H1379.5V436.0H1361.9zM1361.9 436.0H1379.5V440.5H1361.9zM1379.5 471.0H1397.0V474.2H1379.5zM1379.5 467.8H1397.0V471.0H1379.5zM1379.5 417.1H1397.0V423.6H1379.5zM1379.5 451.7H1397.0V454.7H1379.5zM1379.5 437.4H1397.0V440.4H1379.5zM1379.5 455.8H1397.0V458.8H1379.5zM1397.0 477.5H1414.6V480.8H1397.0zM1397.0 474.2H1414.6V477.5H1397.0zM1397.0 471.0H1414.6V474.2H1397.0zM1397.0 467.8H1414.6V471.0H1397.0zM1397.0 448.0H1414.6V451.5H1397.0zM1397.0 460.6H1414.6V463.6H1397.0zM1397.0 456.6H1414.6V460.1H1397.0zM1397.0 430.8H1414.6V437.3H1397.0zM1397.0 430.5H1414.6V436.0H1397.0zM1414.6 471.0H1432.2V474.2H1414.6zM1414.6 467.8H1432.2V471.0H1414.6zM1414.6 443.6H1432.2V450.1H1414.6zM1414.6 462.1H1432.2V465.1H1414.6zM1432.2 471.0H1449.7V474.2H1432.2zM1432.2 434.4H1449.7V437.9H1432.2zM1432.2 454.9H1449.7V458.4H1432.2zM1432.2 372.7H1449.7V376.2H1432.2zM1432.2 415.3H1449.7V418.8H1432.2zM1432.2 457.2H1449.7V460.2H1432.2zM1449.7 448.0H1467.3V451.0H1449.7zM1449.7 459.5H1467.3V463.0H1449.7zM1449.7 455.9H1467.3V459.9H1449.7zM1449.7 450.4H1467.3V456.9H1449.7zM1467.3 467.8H1484.9V471.0H1467.3zM1467.3 420.8H1484.9V423.8H1467.3zM1467.3 462.3H1484.9V465.8H1467.3zM1467.3 443.5H1484.9V446.5H1467.3zM1467.3 430.5H1484.9V436.0H1467.3zM1484.9 437.1H1502.5V441.1H1484.9zM1484.9 401.0H1502.5V404.5H1484.9zM1484.9 450.5H1502.5V453.5H1484.9zM1484.9 417.5H1502.5V421.5H1484.9zM1484.9 426.1H1502.5V432.6H1484.9zM1484.9 451.0H1502.5V457.5H1484.9zM1484.9 458.2H1502.5V461.7H1484.9zM1502.5 474.2H1520.0V477.5H1502.5zM1502.5 467.8H1520.0V471.0H1502.5zM1502.5 421.6H1520.0V428.1H1502.5zM1502.5 438.3H1520.0V441.8H1502.5zM1502.5 449.0H1520.0V455.5H1502.5zM1502.5 450.5H1520.0V454.0H1502.5zM1502.5 458.5H1520.0V465.0H1502.5zM1502.5 442.4H1520.0V445.4H1502.5zM1502.5 443.2H1520.0V446.7H1502.5zM1502.5 386.0H1520.0V390.0H1502.5zM1502.5 458.6H1520.0V462.1H1502.5zM1502.5 449.1H1520.0V452.1H1502.5zM1502.5 460.5H1520.0V463.5H1502.5zM1520.0 464.6H1537.6V467.8H1520.0zM1520.0 401.7H1537.6V405.2H1520.0zM1520.0 393.3H1537.6V396.8H1520.0zM1520.0 433.4H1537.6V437.4H1520.0zM1520.0 458.8H1537.6V462.8H1520.0zM1520.0 437.3H1537.6V443.8H1520.0zM1520.0 462.3H1537.6V465.8H1520.0zM1520.0 369.8H1537.6V373.8H1520.0zM1520.0 428.3H1537.6V434.8H1520.0zM1520.0 457.6H1537.6V461.1H1520.0zM1520.0 430.5H1537.6V436.0H1520.0zM1537.6 474.2H1555.2V477.5H1537.6zM1537.6 464.6H1555.2V467.8H1537.6zM1537.6 419.1H1555.2V422.1H1537.6zM1537.6 404.2H1555.2V407.2H1537.6zM1537.6 362.2H1555.2V365.2H1537.6zM1537.6 453.3H1555.2V456.8H1537.6zM1537.6 448.2H1555.2V454.7H1537.6zM1537.6 432.7H1555.2V436.2H1537.6zM1537.6 449.1H1555.2V452.1H1537.6zM1537.6 343.2H1555.2V349.7H1537.6zM1537.6 391.1H1555.2V394.6H1537.6zM1537.6 430.5H1555.2V436.0H1537.6zM1555.2 467.8H1572.7V471.0H1555.2zM1555.2 305.3H1572.7V309.3H1555.2zM1555.2 397.9H1572.7V400.9H1555.2zM1555.2 451.6H1572.7V454.6H1555.2zM1555.2 363.5H1572.7V367.0H1555.2zM1555.2 409.5H1572.7V413.5H1555.2zM1555.2 439.9H1572.7V443.4H1555.2zM1555.2 361.7H1572.7V365.7H1555.2zM1555.2 405.2H1572.7V409.2H1555.2zM1555.2 430.9H1572.7V433.9H1555.2zM1555.2 454.8H1572.7V457.8H1555.2zM1555.2 430.5H1572.7V436.0H1555.2zM1555.2 436.0H1572.7V440.5H1555.2zM1572.7 464.6H1590.3V467.8H1572.7zM1572.7 447.8H1590.3V450.8H1572.7zM1572.7 358.6H1590.3V361.6H1572.7zM1572.7 438.6H1590.3V441.6H1572.7zM1572.7 446.5H1590.3V450.0H1572.7zM1572.7 447.2H1590.3V450.7H1572.7zM1572.7 460.1H1590.3V463.1H1572.7zM1572.7 457.8H1590.3V461.3H1572.7zM1572.7 405.3H1590.3V408.3H1572.7zM1572.7 462.0H1590.3V465.5H1572.7zM1572.7 435.4H1590.3V438.9H1572.7zM1572.7 430.5H1590.3V436.0H1572.7zM1590.3 477.5H1607.9V480.8H1590.3zM1590.3 464.6H1607.9V467.8H1590.3zM1590.3 437.6H1607.9V441.1H1590.3zM1590.3 456.6H1607.9V459.6H1590.3zM1590.3 421.2H1607.9V424.2H1590.3zM1590.3 440.9H1607.9V444.4H1590.3zM1590.3 459.0H1607.9V462.0H1590.3zM1590.3 400.6H1607.9V404.1H1590.3zM1590.3 438.6H1607.9V442.6H1590.3zM1590.3 453.3H1607.9V456.3H1590.3zM1590.3 430.5H1607.9V436.0H1590.3zM1607.9 471.0H1625.4V474.2H1607.9zM1607.9 464.6H1625.4V467.8H1607.9zM1607.9 410.0H1625.4V413.5H1607.9zM1607.9 364.0H1625.4V368.0H1607.9zM1607.9 422.2H1625.4V426.2H1607.9zM1607.9 427.8H1625.4V430.8H1607.9zM1607.9 453.7H1625.4V456.7H1607.9zM1607.9 435.2H1625.4V438.7H1607.9zM1607.9 445.7H1625.4V449.2H1607.9zM1607.9 450.5H1625.4V454.5H1607.9zM1607.9 427.4H1625.4V431.4H1607.9zM1625.4 467.8H1643.0V471.0H1625.4zM1625.4 444.1H1643.0V450.6H1625.4zM1625.4 362.5H1643.0V366.5H1625.4zM1625.4 394.6H1643.0V397.6H1625.4zM1625.4 440.7H1643.0V443.7H1625.4zM1625.4 441.5H1643.0V445.5H1625.4zM1625.4 445.8H1643.0V448.8H1625.4zM1625.4 427.2H1643.0V430.7H1625.4zM1625.4 395.1H1643.0V401.6H1625.4zM1625.4 430.5H1643.0V436.0H1625.4zM1643.0 467.8H1660.6V471.0H1643.0zM1643.0 370.1H1660.6V373.6H1643.0zM1643.0 381.4H1660.6V384.9H1643.0zM1643.0 457.8H1660.6V460.8H1643.0zM1643.0 430.6H1660.6V434.6H1643.0zM1643.0 440.1H1660.6V443.1H1643.0zM1643.0 457.1H1660.6V463.6H1643.0zM1643.0 438.7H1660.6V442.2H1643.0zM1643.0 404.0H1660.6V407.5H1643.0zM1643.0 375.0H1660.6V378.0H1643.0zM1643.0 437.1H1660.6V441.1H1643.0zM1643.0 436.0H1660.6V440.5H1643.0zM1660.6 467.8H1678.1V471.0H1660.6zM1660.6 377.9H1678.1V381.4H1660.6zM1660.6 452.0H1678.1V458.5H1660.6zM1660.6 427.9H1678.1V430.9H1660.6zM1660.6 397.0H1678.1V400.0H1660.6zM1660.6 426.5H1678.1V430.0H1660.6zM1660.6 450.8H1678.1V454.3H1660.6zM1660.6 454.6H1678.1V458.1H1660.6zM1660.6 391.5H1678.1V395.0H1660.6zM1660.6 413.5H1678.1V416.5H1660.6zM1660.6 430.5H1678.1V436.0H1660.6zM1660.6 436.0H1678.1V440.5H1660.6zM1678.1 453.4H1695.7V456.9H1678.1zM1678.1 458.8H1695.7V465.3H1678.1zM1678.1 418.4H1695.7V421.9H1678.1zM1678.1 446.7H1695.7V450.2H1678.1zM1678.1 410.6H1695.7V413.6H1678.1zM1695.7 474.2H1713.3V477.5H1695.7zM1695.7 471.0H1713.3V474.2H1695.7zM1695.7 467.8H1713.3V471.0H1695.7zM1695.7 396.9H1713.3V400.4H1695.7zM1695.7 431.8H1713.3V434.8H1695.7zM1695.7 451.6H1713.3V455.1H1695.7zM1695.7 454.6H1713.3V457.6H1695.7zM1695.7 420.1H1713.3V423.1H1695.7zM1695.7 458.7H1713.3V462.7H1695.7zM1695.7 363.1H1713.3V366.1H1695.7zM1695.7 448.4H1713.3V451.9H1695.7zM1695.7 427.7H1713.3V430.7H1695.7zM1695.7 430.5H1713.3V436.0H1695.7zM1695.7 436.0H1713.3V440.5H1695.7zM1713.3 467.8H1730.9V471.0H1713.3zM1713.3 464.6H1730.9V467.8H1713.3zM1713.3 404.7H1730.9V408.7H1713.3zM1713.3 399.5H1730.9V402.5H1713.3zM1713.3 435.5H1730.9V442.0H1713.3zM1713.3 397.2H1730.9V403.7H1713.3zM1713.3 451.2H1730.9V454.7H1713.3zM1713.3 381.6H1730.9V385.6H1713.3zM1713.3 427.3H1730.9V430.3H1713.3zM1713.3 422.6H1730.9V426.6H1713.3zM1713.3 438.5H1730.9V442.0H1713.3zM1713.3 381.4H1730.9V384.4H1713.3zM1730.9 398.1H1748.4V401.1H1730.9zM1730.9 433.1H1748.4V439.6H1730.9zM1730.9 315.0H1748.4V318.0H1730.9zM1730.9 404.7H1748.4V408.7H1730.9zM1730.9 461.3H1748.4V464.3H1730.9zM1730.9 431.7H1748.4V434.7H1730.9zM1730.9 447.6H1748.4V451.1H1730.9zM1730.9 448.3H1748.4V451.3H1730.9zM1730.9 450.9H1748.4V454.4H1730.9zM1730.9 430.5H1748.4V436.0H1730.9zM1730.9 436.0H1748.4V440.5H1730.9zM1748.4 435.0H1766.0V438.5H1748.4zM1748.4 436.0H1766.0V439.5H1748.4zM1748.4 431.2H1766.0V437.7H1748.4zM1748.4 379.6H1766.0V382.6H1748.4zM1748.4 440.2H1766.0V443.2H1748.4zM1748.4 443.6H1766.0V447.1H1748.4zM1748.4 428.8H1766.0V435.3H1748.4zM1748.4 438.5H1766.0V445.0H1748.4zM1748.4 430.5H1766.0V436.0H1748.4zM1748.4 436.0H1766.0V440.5H1748.4zM1766.0 471.0H1783.6V474.2H1766.0zM1766.0 464.6H1783.6V467.8H1766.0zM1766.0 455.1H1783.6V459.1H1766.0zM1766.0 452.7H1783.6V456.2H1766.0zM1766.0 430.0H1783.6V433.0H1766.0zM1766.0 429.1H1783.6V432.6H1766.0zM1766.0 416.9H1783.6V419.9H1766.0zM1766.0 386.4H1783.6V390.4H1766.0zM1766.0 440.7H1783.6V444.2H1766.0zM1766.0 444.5H1783.6V447.5H1766.0zM1766.0 430.5H1783.6V436.0H1766.0zM1766.0 436.0H1783.6V440.5H1766.0zM1783.6 471.0H1801.1V474.2H1783.6zM1783.6 445.4H1801.1V451.9H1783.6zM1783.6 455.2H1801.1V458.7H1783.6zM1783.6 401.1H1801.1V404.6H1783.6zM1783.6 451.5H1801.1V454.5H1783.6zM1783.6 363.0H1801.1V366.0H1783.6zM1783.6 449.5H1801.1V453.5H1783.6zM1783.6 359.2H1801.1V362.7H1783.6zM1783.6 361.5H1801.1V365.0H1783.6zM1783.6 442.1H1801.1V446.1H1783.6zM1783.6 430.5H1801.1V436.0H1783.6zM1783.6 436.0H1801.1V440.5H1783.6zM1801.1 464.6H1818.7V467.8H1801.1zM1801.1 422.4H1818.7V425.9H1801.1zM1801.1 411.4H1818.7V414.4H1801.1zM1801.1 420.5H1818.7V424.5H1801.1zM1801.1 423.1H1818.7V426.1H1801.1zM1801.1 388.2H1818.7V391.7H1801.1zM1801.1 362.0H1818.7V365.0H1801.1zM1801.1 414.2H1818.7V417.7H1801.1zM1801.1 444.2H1818.7V447.2H1801.1zM1801.1 454.0H1818.7V457.0H1801.1zM1801.1 451.6H1818.7V455.6H1801.1zM1801.1 430.5H1818.7V436.0H1801.1zM1801.1 436.0H1818.7V440.5H1801.1zM1818.7 442.5H1836.3V449.0H1818.7zM1818.7 427.7H1836.3V431.2H1818.7zM1818.7 440.3H1836.3V446.8H1818.7zM1818.7 451.6H1836.3V454.6H1818.7zM1818.7 410.6H1836.3V414.6H1818.7zM1818.7 374.8H1836.3V377.8H1818.7zM1818.7 371.4H1836.3V374.9H1818.7zM1818.7 434.3H1836.3V440.8H1818.7zM1818.7 430.5H1836.3V436.0H1818.7zM1836.3 454.5H1853.8V457.5H1836.3zM1836.3 421.5H1853.8V425.0H1836.3zM1836.3 456.9H1853.8V460.4H1836.3zM1836.3 445.0H1853.8V451.5H1836.3zM1836.3 461.4H1853.8V465.4H1836.3zM1836.3 397.3H1853.8V400.3H1836.3zM1836.3 449.2H1853.8V452.7H1836.3zM1836.3 430.5H1853.8V436.0H1836.3zM1853.8 471.0H1871.4V474.2H1853.8zM1853.8 455.1H1871.4V458.1H1853.8zM1853.8 391.8H1871.4V398.3H1853.8zM1853.8 441.1H1871.4V445.1H1853.8zM1853.8 455.6H1871.4V459.6H1853.8zM1853.8 412.3H1871.4V416.3H1853.8zM1853.8 377.9H1871.4V381.4H1853.8zM1853.8 457.7H1871.4V461.2H1853.8zM1853.8 439.2H1871.4V442.2H1853.8zM1853.8 461.2H1871.4V465.2H1853.8zM1853.8 449.1H1871.4V452.6H1853.8zM1853.8 430.5H1871.4V436.0H1853.8zM1853.8 436.0H1871.4V440.5H1853.8zM1871.4 450.8H1889.0V453.8H1871.4zM1871.4 378.5H1889.0V382.0H1871.4zM1871.4 344.3H1889.0V347.3H1871.4zM1871.4 461.9H1889.0V464.9H1871.4zM1871.4 415.3H1889.0V418.8H1871.4zM1871.4 403.7H1889.0V407.2H1871.4zM1871.4 436.7H1889.0V439.7H1871.4zM1871.4 443.0H1889.0V447.0H1871.4zM1871.4 447.7H1889.0V454.2H1871.4zM1871.4 446.5H1889.0V450.5H1871.4zM1871.4 401.7H1889.0V404.7H1871.4zM1871.4 436.0H1889.0V440.5H1871.4zM1889.0 474.2H1906.5V477.5H1889.0zM1889.0 467.8H1906.5V471.0H1889.0zM1889.0 464.6H1906.5V467.8H1889.0zM1889.0 461.0H1906.5V464.0H1889.0zM1889.0 415.1H1906.5V418.1H1889.0zM1889.0 455.4H1906.5V458.9H1889.0zM1889.0 439.3H1906.5V442.3H1889.0zM1889.0 460.7H1906.5V463.7H1889.0zM1889.0 430.6H1906.5V433.6H1889.0zM1889.0 454.9H1906.5V457.9H1889.0zM1889.0 457.7H1906.5V461.2H1889.0zM1889.0 436.0H1906.5V440.5H1889.0zM1906.5 471.0H1924.1V474.2H1906.5zM1906.5 431.7H1924.1V434.7H1906.5zM1906.5 420.2H1924.1V423.7H1906.5zM1906.5 459.6H1924.1V463.6H1906.5zM1906.5 367.7H1924.1V374.2H1906.5zM1906.5 432.5H1924.1V436.5H1906.5zM1906.5 454.1H1924.1V460.6H1906.5zM1906.5 434.1H1924.1V440.6H1906.5zM1906.5 385.9H1924.1V389.9H1906.5zM1906.5 423.4H1924.1V427.4H1906.5zM1924.1 443.7H1941.7V450.2H1924.1zM1924.1 429.3H1941.7V432.3H1924.1zM1924.1 456.8H1941.7V460.3H1924.1zM1924.1 450.8H1941.7V457.3H1924.1zM1924.1 456.6H1941.7V459.6H1924.1zM1924.1 432.4H1941.7V435.9H1924.1zM1924.1 373.8H1941.7V380.3H1924.1zM1924.1 431.9H1941.7V435.4H1924.1zM1924.1 430.2H1941.7V433.7H1924.1zM1924.1 445.7H1941.7V452.2H1924.1zM1924.1 457.7H1941.7V461.2H1924.1zM1924.1 430.5H1941.7V436.0H1924.1zM1924.1 436.0H1941.7V440.5H1924.1zM1941.7 477.5H1959.3V480.8H1941.7zM1941.7 352.0H1959.3V355.0H1941.7zM1941.7 457.8H1959.3V460.8H1941.7zM1941.7 458.2H1959.3V464.7H1941.7zM1941.7 365.5H1959.3V368.5H1941.7zM1941.7 418.0H1959.3V422.0H1941.7zM1941.7 442.5H1959.3V446.0H1941.7zM1941.7 430.5H1959.3V436.0H1941.7zM1959.3 474.2H1976.8V477.5H1959.3zM1959.3 467.8H1976.8V471.0H1959.3zM1959.3 421.5H1976.8V425.0H1959.3zM1959.3 406.5H1976.8V410.0H1959.3zM1959.3 401.3H1976.8V404.3H1959.3zM1959.3 420.6H1976.8V424.1H1959.3zM1959.3 422.7H1976.8V426.2H1959.3zM1959.3 433.3H1976.8V436.3H1959.3zM1959.3 411.9H1976.8V414.9H1959.3zM1959.3 457.7H1976.8V460.7H1959.3zM1959.3 448.8H1976.8V451.8H1959.3zM1959.3 437.0H1976.8V440.5H1959.3zM1959.3 436.0H1976.8V440.5H1959.3zM1976.8 397.4H1994.4V400.4H1976.8zM1976.8 405.6H1994.4V412.1H1976.8zM1976.8 372.8H1994.4V379.3H1976.8zM1976.8 435.9H1994.4V439.4H1976.8zM1976.8 432.9H1994.4V436.4H1976.8zM1976.8 430.5H1994.4V436.0H1976.8zM1994.4 464.6H2012.0V467.8H1994.4zM1994.4 413.8H2012.0V420.3H1994.4zM1994.4 372.0H2012.0V375.5H1994.4zM1994.4 457.7H2012.0V461.2H1994.4zM1994.4 431.0H2012.0V434.0H1994.4zM1994.4 457.8H2012.0V461.8H1994.4zM1994.4 460.1H2012.0V463.1H1994.4zM1994.4 458.1H2012.0V462.1H1994.4zM1994.4 444.7H2012.0V447.7H1994.4zM1994.4 430.5H2012.0V436.0H1994.4zM2012.0 454.8H2029.5V458.8H2012.0zM2012.0 440.7H2029.5V444.2H2012.0zM2012.0 317.2H2029.5V323.7H2012.0zM2012.0 399.7H2029.5V403.2H2012.0zM2012.0 459.1H2029.5V462.6H2012.0zM2012.0 417.5H2029.5V421.0H2012.0zM2012.0 426.8H2029.5V430.8H2012.0zM2012.0 455.2H2029.5V461.7H2012.0zM2012.0 406.0H2029.5V409.5H2012.0zM2012.0 430.5H2029.5V436.0H2012.0zM2012.0 436.0H2029.5V440.5H2012.0zM2029.5 474.2H2047.1V477.5H2029.5zM2029.5 464.6H2047.1V467.8H2029.5zM2029.5 320.7H2047.1V327.2H2029.5zM2029.5 446.9H2047.1V450.9H2029.5zM2029.5 460.6H2047.1V463.6H2029.5zM2029.5 432.0H2047.1V435.5H2029.5zM2029.5 458.4H2047.1V461.9H2029.5zM2029.5 430.5H2047.1V436.0H2029.5zM2047.1 390.6H2064.7V394.1H2047.1zM2047.1 460.0H2064.7V463.5H2047.1zM2047.1 420.8H2064.7V424.8H2047.1zM2047.1 442.0H2064.7V448.5H2047.1zM2047.1 348.6H2064.7V351.6H2047.1zM2047.1 459.3H2064.7V465.8H2047.1zM2047.1 455.0H2064.7V458.0H2047.1zM2047.1 430.5H2064.7V436.0H2047.1zM2064.7 477.5H2082.2V480.8H2064.7zM2064.7 430.7H2082.2V433.7H2064.7zM2064.7 449.0H2082.2V452.5H2064.7zM2064.7 438.7H2082.2V442.2H2064.7zM2064.7 411.5H2082.2V415.0H2064.7zM2064.7 413.4H2082.2V416.9H2064.7zM2064.7 434.4H2082.2V438.4H2064.7zM2064.7 454.4H2082.2V458.4H2064.7zM2064.7 462.4H2082.2V465.4H2064.7zM2064.7 442.1H2082.2V446.1H2064.7zM2082.2 464.6H2099.8V467.8H2082.2zM2082.2 444.4H2099.8V447.9H2082.2zM2082.2 450.5H2099.8V453.5H2082.2zM2082.2 450.6H2099.8V453.6H2082.2zM2082.2 438.2H2099.8V442.2H2082.2zM2082.2 454.2H2099.8V457.7H2082.2zM2082.2 436.9H2099.8V440.4H2082.2zM2082.2 453.3H2099.8V457.3H2082.2zM2082.2 447.6H2099.8V450.6H2082.2zM2082.2 411.6H2099.8V415.6H2082.2zM2082.2 430.5H2099.8V436.0H2082.2zM2082.2 436.0H2099.8V440.5H2082.2zM2099.8 451.0H2117.4V454.0H2099.8zM2099.8 367.0H2117.4V373.5H2099.8zM2099.8 450.8H2117.4V453.8H2099.8zM2099.8 459.7H2117.4V462.7H2099.8zM2099.8 448.3H2117.4V452.3H2099.8zM2099.8 441.3H2117.4V445.3H2099.8zM2099.8 422.5H2117.4V426.5H2099.8zM2099.8 452.0H2117.4V458.5H2099.8zM2099.8 436.0H2117.4V440.5H2099.8zM2117.4 474.2H2135.0V477.5H2117.4zM2117.4 471.0H2135.0V474.2H2117.4zM2117.4 446.2H2135.0V452.7H2117.4zM2117.4 450.9H2135.0V454.9H2117.4zM2117.4 341.0H2135.0V347.5H2117.4zM2117.4 447.9H2135.0V450.9H2117.4zM2117.4 428.0H2135.0V431.0H2117.4zM2117.4 443.3H2135.0V446.8H2117.4zM2117.4 456.8H2135.0V463.3H2117.4zM2117.4 456.1H2135.0V459.6H2117.4zM2117.4 435.4H2135.0V441.9H2117.4zM2117.4 431.1H2135.0V434.6H2117.4zM2135.0 380.8H2152.5V383.8H2135.0zM2135.0 392.8H2152.5V399.3H2135.0zM2135.0 366.5H2152.5V370.0H2135.0zM2135.0 458.2H2152.5V462.2H2135.0zM2135.0 360.4H2152.5V363.4H2135.0zM2135.0 377.6H2152.5V380.6H2135.0zM2135.0 456.2H2152.5V459.2H2135.0zM2135.0 431.2H2152.5V435.2H2135.0zM2135.0 430.5H2152.5V436.0H2135.0zM2135.0 436.0H2152.5V440.5H2135.0zM2152.5 462.4H2170.1V465.4H2152.5zM2152.5 425.0H2170.1V429.0H2152.5zM2152.5 431.6H2170.1V435.1H2152.5zM2152.5 451.3H2170.1V454.8H2152.5zM2152.5 455.7H2170.1V459.2H2152.5zM2152.5 452.0H2170.1V455.5H2152.5zM2152.5 414.4H2170.1V418.4H2152.5zM2152.5 431.4H2170.1V434.9H2152.5zM2152.5 461.6H2170.1V465.1H2152.5zM2152.5 447.4H2170.1V450.9H2152.5zM2152.5 430.5H2170.1V436.0H2152.5zM2170.1 421.7H2187.7V428.2H2170.1zM2170.1 309.1H2187.7V312.1H2170.1zM2170.1 461.6H2187.7V464.6H2170.1zM2170.1 455.8H2187.7V458.8H2170.1zM2170.1 374.6H2187.7V377.6H2170.1zM2170.1 445.4H2187.7V448.4H2170.1zM2170.1 410.3H2187.7V413.3H2170.1zM2170.1 453.4H2187.7V459.9H2170.1zM2170.1 380.1H2187.7V386.6H2170.1zM2170.1 443.4H2187.7V446.4H2170.1zM2170.1 430.5H2187.7V436.0H2170.1zM2170.1 436.0H2187.7V440.5H2170.1zM2187.7 467.8H2205.2V471.0H2187.7zM2187.7 464.6H2205.2V467.8H2187.7zM2187.7 339.5H2205.2V342.5H2187.7zM2187.7 455.2H2205.2V458.7H2187.7zM2187.7 457.8H2205.2V461.3H2187.7zM2187.7 311.5H2205.2V315.0H2187.7zM2187.7 437.7H2205.2V441.7H2187.7zM2187.7 460.8H2205.2V463.8H2187.7zM2187.7 430.5H2205.2V436.0H2187.7zM2205.2 447.8H2222.8V450.8H2205.2zM2205.2 382.9H2222.8V386.9H2205.2zM2205.2 435.1H2222.8V439.1H2205.2zM2205.2 455.4H2222.8V458.4H2205.2zM2205.2 426.0H2222.8V429.5H2205.2zM2205.2 425.4H2222.8V428.9H2205.2zM2205.2 360.1H2222.8V363.1H2205.2zM2205.2 418.7H2222.8V425.2H2205.2zM2205.2 430.5H2222.8V436.0H2205.2zM2222.8 464.6H2240.4V467.8H2222.8zM2222.8 448.8H2240.4V452.8H2222.8zM2222.8 427.7H2240.4V430.7H2222.8zM2222.8 433.6H2240.4V437.1H2222.8zM2222.8 456.5H2240.4V459.5H2222.8zM2222.8 438.4H2240.4V441.4H2222.8zM2222.8 459.8H2240.4V463.8H2222.8zM2222.8 395.3H2240.4V398.8H2222.8zM2222.8 420.9H2240.4V423.9H2222.8zM2222.8 429.0H2240.4V432.0H2222.8zM2222.8 434.9H2240.4V438.4H2222.8zM2222.8 436.0H2240.4V440.5H2222.8zM2240.4 477.5H2257.9V480.8H2240.4zM2240.4 413.2H2257.9V416.2H2240.4zM2240.4 440.1H2257.9V446.6H2240.4zM2240.4 440.4H2257.9V446.9H2240.4zM2240.4 386.9H2257.9V393.4H2240.4zM2240.4 350.7H2257.9V353.7H2240.4zM2240.4 341.7H2257.9V345.2H2240.4zM2257.9 419.1H2275.5V422.1H2257.9zM2257.9 373.3H2275.5V379.8H2257.9zM2257.9 451.9H2275.5V458.4H2257.9zM2257.9 462.3H2275.5V465.3H2257.9zM2257.9 346.8H2275.5V349.8H2257.9zM2257.9 414.7H2275.5V421.2H2257.9zM2257.9 445.6H2275.5V449.1H2257.9zM2257.9 453.3H2275.5V459.8H2257.9zM2257.9 430.5H2275.5V436.0H2257.9zM2257.9 436.0H2275.5V440.5H2257.9zM2275.5 467.8H2293.1V471.0H2275.5zM2275.5 448.9H2293.1V452.4H2275.5zM2275.5 437.0H2293.1V443.5H2275.5zM2275.5 455.7H2293.1V458.7H2275.5zM2275.5 388.5H2293.1V391.5H2275.5zM2275.5 442.5H2293.1V449.0H2275.5zM2275.5 429.7H2293.1V436.2H2275.5zM2275.5 441.7H2293.1V445.2H2275.5zM2275.5 446.7H2293.1V449.7H2275.5zM2275.5 430.5H2293.1V436.0H2275.5zM2293.1 467.8H2310.6V471.0H2293.1zM2293.1 425.8H2310.6V429.3H2293.1zM2293.1 350.8H2310.6V354.3H2293.1zM2293.1 454.3H2310.6V457.3H2293.1zM2293.1 462.4H2310.6V465.9H2293.1zM2293.1 436.0H2310.6V440.5H2293.1zM2310.6 332.9H2328.2V336.4H2310.6zM2310.6 432.0H2328.2V435.5H2310.6zM2310.6 452.0H2328.2V458.5H2310.6zM2310.6 446.6H2328.2V450.1H2310.6zM2310.6 456.6H2328.2V459.6H2310.6zM2310.6 425.6H2328.2V429.1H2310.6zM2310.6 430.4H2328.2V433.4H2310.6zM2310.6 450.6H2328.2V454.6H2310.6zM2328.2 467.8H2345.8V471.0H2328.2zM2328.2 350.1H2345.8V353.6H2328.2zM2328.2 460.7H2345.8V463.7H2328.2zM2328.2 423.4H2345.8V427.4H2328.2zM2328.2 429.3H2345.8V432.8H2328.2zM2328.2 451.4H2345.8V455.4H2328.2zM2328.2 436.3H2345.8V442.8H2328.2zM2328.2 425.7H2345.8V428.7H2328.2zM2328.2 449.8H2345.8V453.3H2328.2zM2328.2 434.5H2345.8V437.5H2328.2zM2328.2 430.5H2345.8V436.0H2328.2zM2345.8 420.8H2363.4V424.8H2345.8zM2345.8 450.6H2363.4V457.1H2345.8zM2345.8 439.4H2363.4V442.4H2345.8zM2345.8 417.0H2363.4V420.5H2345.8zM2345.8 441.7H2363.4V444.7H2345.8zM2345.8 454.0H2363.4V460.5H2345.8zM2345.8 430.5H2363.4V436.0H2345.8zM2345.8 436.0H2363.4V440.5H2345.8zM2363.4 477.5H2380.9V480.8H2363.4zM2363.4 448.7H2380.9V452.7H2363.4zM2363.4 439.2H2380.9V442.7H2363.4zM2363.4 457.7H2380.9V461.2H2363.4zM2363.4 408.1H2380.9V412.1H2363.4zM2363.4 457.1H2380.9V460.1H2363.4zM2363.4 432.6H2380.9V435.6H2363.4zM2363.4 430.5H2380.9V436.0H2363.4zM2363.4 436.0H2380.9V440.5H2363.4zM2380.9 457.6H2398.5V461.1H2380.9zM2380.9 397.7H2398.5V400.7H2380.9zM2380.9 385.4H2398.5V391.9H2380.9zM2380.9 442.8H2398.5V446.8H2380.9zM2380.9 455.2H2398.5V458.7H2380.9zM2380.9 454.8H2398.5V458.3H2380.9zM2380.9 439.1H2398.5V445.6H2380.9zM2380.9 430.5H2398.5V436.0H2380.9zM2398.5 460.8H2416.1V464.3H2398.5zM2398.5 462.4H2416.1V465.4H2398.5zM2398.5 453.9H2416.1V457.4H2398.5zM2398.5 462.0H2416.1V465.5H2398.5zM2398.5 435.6H2416.1V439.1H2398.5zM2398.5 457.7H2416.1V460.7H2398.5zM2398.5 441.0H2416.1V444.5H2398.5zM2416.1 474.2H2433.6V477.5H2416.1zM2416.1 440.4H2433.6V443.9H2416.1zM2416.1 405.2H2433.6V411.7H2416.1zM2416.1 448.6H2433.6V452.1H2416.1zM2416.1 442.1H2433.6V445.1H2416.1zM2416.1 320.4H2433.6V323.4H2416.1zM2416.1 454.0H2433.6V457.5H2416.1zM2416.1 440.8H2433.6V444.3H2416.1zM2416.1 430.5H2433.6V436.0H2416.1zM2433.6 474.2H2451.2V477.5H2433.6zM2433.6 471.0H2451.2V474.2H2433.6zM2433.6 437.7H2451.2V441.2H2433.6zM2433.6 439.3H2451.2V442.3H2433.6zM2433.6 456.8H2451.2V460.3H2433.6zM2433.6 454.2H2451.2V457.7H2433.6zM2433.6 444.2H2451.2V448.2H2433.6zM2433.6 324.7H2451.2V328.7H2433.6zM2433.6 452.0H2451.2V458.5H2433.6zM2433.6 435.2H2451.2V438.2H2433.6zM2451.2 390.0H2468.8V396.5H2451.2zM2451.2 431.8H2468.8V435.8H2451.2zM2451.2 427.4H2468.8V431.4H2451.2zM2451.2 396.2H2468.8V402.7H2451.2zM2451.2 425.3H2468.8V428.3H2451.2zM2451.2 431.1H2468.8V434.1H2451.2zM2451.2 453.2H2468.8V456.2H2451.2zM2451.2 430.5H2468.8V436.0H2451.2zM2468.8 380.4H2486.3V383.9H2468.8zM2468.8 460.7H2486.3V464.2H2468.8zM2468.8 458.6H2486.3V462.1H2468.8zM2468.8 461.2H2486.3V465.2H2468.8zM2468.8 456.2H2486.3V459.2H2468.8zM2468.8 418.4H2486.3V422.4H2468.8zM2468.8 444.6H2486.3V448.1H2468.8zM2468.8 430.5H2486.3V436.0H2468.8zM2468.8 436.0H2486.3V440.5H2468.8zM2486.3 450.0H2503.9V453.0H2486.3zM2486.3 457.7H2503.9V460.7H2486.3zM2486.3 451.2H2503.9V457.7H2486.3zM2486.3 460.3H2503.9V463.3H2486.3zM2486.3 450.4H2503.9V453.4H2486.3zM2486.3 430.5H2503.9V436.0H2486.3zM2486.3 436.0H2503.9V440.5H2486.3zM2503.9 452.9H2521.5V456.4H2503.9zM2503.9 451.6H2521.5V455.1H2503.9zM2503.9 466.4H2521.5V469.9H2503.9zM2521.5 517.2H2539.0V519.2H2521.5zM2521.5 513.5H2539.0V516.5H2521.5zM2521.5 488.1H2539.0V491.1H2521.5zM2539.0 495.6H2556.6V499.1H2539.0zM2539.0 479.2H2556.6V482.2H2539.0zM2556.6 517.2H2574.2V519.2H2556.6zM2556.6 501.8H2574.2V505.3H2556.6zM2556.6 507.7H2574.2V511.7H2556.6zM2574.2 517.2H2591.8V519.2H2574.2zM2574.2 477.6H2591.8V483.6H2574.2zM2591.8 484.0H2609.3V487.5H2591.8zM2591.8 480.1H2609.3V486.1H2591.8zM2591.8 492.5H2609.3V495.5H2591.8zM2591.8 488.8H2609.3V492.3H2591.8zM2609.3 503.6H2626.9V506.6H2609.3zM2609.3 474.1H2626.9V478.1H2609.3zM2609.3 493.3H2626.9V496.3H2609.3zM2626.9 484.0H2644.5V487.5H2626.9zM2626.9 505.4H2644.5V511.4H2626.9zM2626.9 496.4H2644.5V499.9H2626.9zM2626.9 500.9H2644.5V506.9H2626.9zM2626.9 498.6H2644.5V502.1H2626.9zM2644.5 484.0H2662.0V487.5H2644.5zM2644.5 495.8H2662.0V499.3H2644.5zM2644.5 501.3H2662.0V504.3H2644.5zM2644.5 510.9H2662.0V514.4H2644.5zM2662.0 477.2H2679.6V480.2H2662.0zM2662.0 480.3H2679.6V484.3H2662.0zM2679.6 500.4H2697.2V504.4H2679.6zM2697.2 485.0H2714.7V491.0H2697.2zM2697.2 489.2H2714.7V492.7H2697.2zM2714.7 517.2H2732.3V519.2H2714.7zM2714.7 502.5H2732.3V506.5H2714.7zM2732.3 502.5H2749.9V506.5H2732.3zM2767.5 482.9H2785.0V488.9H2767.5zM2767.5 488.1H2785.0V491.6H2767.5zM2802.6 517.2H2820.2V519.2H2802.6zM2802.6 484.0H2820.2V487.5H2802.6zM2820.2 517.2H2837.7V519.2H2820.2zM2820.2 484.0H2837.7V487.5H2820.2zM2820.2 491.6H2837.7V495.1H2820.2zM2837.7 484.0H2855.3V487.5H2837.7zM2837.7 493.8H2855.3V497.3H2837.7zM2837.7 510.6H2855.3V514.1H2837.7zM2855.3 484.0H2872.9V487.5H2855.3zM2872.9 517.2H2890.4V519.2H2872.9zM2872.9 487.0H2890.4V490.0H2872.9zM2872.9 510.8H2890.4V513.8H2872.9zM2890.4 509.0H2908.0V512.5H2890.4zM2890.4 497.6H2908.0V501.1H2890.4zM2908.0 517.2H2925.6V519.2H2908.0zM2908.0 484.0H2925.6V487.5H2908.0zM2908.0 496.3H2925.6V499.3H2908.0zM2925.6 517.2H2943.1V519.2H2925.6zM2925.6 505.9H2943.1V511.9H2925.6zM2925.6 492.7H2943.1V496.2H2925.6zM2943.1 517.2H2960.7V519.2H2943.1zM2943.1 484.0H2960.7V487.5H2943.1zM2943.1 495.1H2960.7V501.1H2943.1zM2960.7 484.0H2978.3V487.5H2960.7zM2960.7 491.6H2978.3V495.6H2960.7zM2960.7 502.3H2978.3V506.3H2960.7zM2978.3 488.0H2995.9V494.0H2978.3zM3013.4 503.0H3031.0V506.5H3013.4zM3031.0 504.5H3048.6V507.5H3031.0zM3066.1 517.2H3083.7V519.2H3066.1zM3066.1 484.0H3083.7V487.5H3066.1zM3066.1 476.5H3083.7V482.5H3066.1zM3066.1 495.1H3083.7V499.1H3066.1zM3083.7 484.0H3101.3V487.5H3083.7zM3083.7 511.3H3101.3V514.3H3083.7zM3083.7 507.3H3101.3V510.3H3083.7zM3101.3 484.0H3118.8V487.5H3101.3zM3118.8 509.5H3136.4V515.5H3118.8zM3154.0 495.9H3171.5V501.9H3154.0zM3189.1 484.0H3206.7V487.5H3189.1zM3189.1 489.6H3206.7V493.6H3189.1zM3189.1 476.0H3206.7V482.0H3189.1zM3206.7 484.0H3224.3V487.5H3206.7zM3206.7 505.1H3224.3V508.6H3206.7zM3206.7 496.7H3224.3V500.2H3206.7zM3224.3 517.2H3241.8V519.2H3224.3zM3241.8 484.0H3259.4V487.5H3241.8zM3241.8 495.6H3259.4V499.1H3241.8zM3241.8 491.8H3259.4V495.3H3241.8zM3259.4 484.0H3277.0V487.5H3259.4zM3259.4 511.3H3277.0V514.8H3259.4zM3294.5 517.2H3312.1V519.2H3294.5zM3312.1 479.0H3329.7V483.0H3312.1zM3329.7 502.9H3347.2V506.4H3329.7zM3364.8 484.0H3382.4V487.5H3364.8zM3364.8 482.5H3382.4V486.0H3364.8zM3400.0 484.0H3417.5V487.5H3400.0zM3417.5 517.2H3435.1V519.2H3417.5zM3417.5 484.0H3435.1V487.5H3417.5zM3417.5 504.9H3435.1V508.9H3417.5zM3435.1 517.2H3452.7V519.2H3435.1zM3522.9 479.2H3540.5V483.2H3522.9zM3522.9 486.2H3540.5V492.2H3522.9zM3540.5 484.0H3558.1V487.5H3540.5zM3540.5 490.4H3558.1V493.9H3540.5zM3540.5 505.1H3558.1V509.1H3540.5zM3558.1 489.2H3575.6V492.2H3558.1zM3558.1 477.6H3575.6V483.6H3558.1zM3575.6 484.0H3593.2V487.5H3575.6zM3575.6 484.0H3593.2V487.5H3575.6zM3593.2 517.2H3602.0V519.2H3593.2z"/><path fill="#37356a" d="M1072.0 480.8H1080.8V484.0H1072.0zM1115.9 474.2H1133.5V477.5H1115.9zM1151.1 477.5H1168.6V480.8H1151.1zM1151.1 471.0H1168.6V474.2H1151.1zM1168.6 430.5H1186.2V436.0H1168.6zM1203.8 471.0H1221.3V474.2H1203.8zM1274.0 474.2H1291.6V477.5H1274.0zM1274.0 471.0H1291.6V474.2H1274.0zM1291.6 474.2H1309.2V477.5H1291.6zM1291.6 471.0H1309.2V474.2H1291.6zM1326.8 474.2H1344.3V477.5H1326.8zM1379.5 474.2H1397.0V477.5H1379.5zM1397.0 438.3H1414.6V441.8H1397.0zM1414.6 474.2H1432.2V477.5H1414.6zM1467.3 477.5H1484.9V480.8H1467.3zM1484.9 430.5H1502.5V436.0H1484.9zM1502.5 471.0H1520.0V474.2H1502.5zM1520.0 477.5H1537.6V480.8H1520.0zM1520.0 467.8H1537.6V471.0H1520.0zM1537.6 471.0H1555.2V474.2H1537.6zM1537.6 467.8H1555.2V471.0H1537.6zM1572.7 474.2H1590.3V477.5H1572.7zM1590.3 474.2H1607.9V477.5H1590.3zM1590.3 467.8H1607.9V471.0H1590.3zM1607.9 467.8H1625.4V471.0H1607.9zM1607.9 409.5H1625.4V413.5H1607.9zM1607.9 372.4H1625.4V375.9H1607.9zM1625.4 471.0H1643.0V474.2H1625.4zM1643.0 471.0H1660.6V474.2H1643.0zM1660.6 471.0H1678.1V474.2H1660.6zM1678.1 471.0H1695.7V474.2H1678.1zM1678.1 421.0H1695.7V424.0H1678.1zM1713.3 474.2H1730.9V477.5H1713.3zM1713.3 471.0H1730.9V474.2H1713.3zM1713.3 460.5H1730.9V464.5H1713.3zM1730.9 402.9H1748.4V406.9H1730.9zM1730.9 309.9H1748.4V316.4H1730.9zM1748.4 474.2H1766.0V477.5H1748.4zM1766.0 467.8H1783.6V471.0H1766.0zM1801.1 467.8H1818.7V471.0H1801.1zM1818.7 467.8H1836.3V471.0H1818.7zM1836.3 477.5H1853.8V480.8H1836.3zM1836.3 387.9H1853.8V391.9H1836.3zM1836.3 438.3H1853.8V444.8H1836.3zM1853.8 477.5H1871.4V480.8H1853.8zM1853.8 467.8H1871.4V471.0H1853.8zM1889.0 477.5H1906.5V480.8H1889.0zM1889.0 471.0H1906.5V474.2H1889.0zM1906.5 474.2H1924.1V477.5H1906.5zM1906.5 467.8H1924.1V471.0H1906.5zM1941.7 471.0H1959.3V474.2H1941.7zM1941.7 467.8H1959.3V471.0H1941.7zM1959.3 430.5H1976.8V436.0H1959.3zM1976.8 477.5H1994.4V480.8H1976.8zM1976.8 474.2H1994.4V477.5H1976.8zM1994.4 471.0H2012.0V474.2H1994.4zM1994.4 467.8H2012.0V471.0H1994.4zM1994.4 461.8H2012.0V465.3H1994.4zM2012.0 471.0H2029.5V474.2H2012.0zM2012.0 431.3H2029.5V437.8H2012.0zM2029.5 442.4H2047.1V446.4H2029.5zM2047.1 477.5H2064.7V480.8H2047.1zM2047.1 471.0H2064.7V474.2H2047.1zM2047.1 467.8H2064.7V471.0H2047.1zM2047.1 442.3H2064.7V448.8H2047.1zM2064.7 467.8H2082.2V471.0H2064.7zM2064.7 430.5H2082.2V436.0H2064.7zM2099.8 467.8H2117.4V471.0H2099.8zM2099.8 420.1H2117.4V426.6H2099.8zM2117.4 467.8H2135.0V471.0H2117.4zM2117.4 288.8H2135.0V295.3H2117.4zM2135.0 474.2H2152.5V477.5H2135.0zM2135.0 344.6H2152.5V348.6H2135.0zM2152.5 467.8H2170.1V471.0H2152.5zM2187.7 477.5H2205.2V480.8H2187.7zM2187.7 461.8H2205.2V465.3H2187.7zM2187.7 461.3H2205.2V464.3H2187.7zM2222.8 430.5H2240.4V436.0H2222.8zM2240.4 471.0H2257.9V474.2H2240.4zM2257.9 471.0H2275.5V474.2H2257.9zM2275.5 477.5H2293.1V480.8H2275.5zM2275.5 471.0H2293.1V474.2H2275.5zM2293.1 477.5H2310.6V480.8H2293.1zM2293.1 471.0H2310.6V474.2H2293.1zM2310.6 471.0H2328.2V474.2H2310.6zM2328.2 471.0H2345.8V474.2H2328.2zM2345.8 474.2H2363.4V477.5H2345.8zM2345.8 471.0H2363.4V474.2H2345.8zM2380.9 471.0H2398.5V474.2H2380.9zM2398.5 474.2H2416.1V477.5H2398.5zM2398.5 471.0H2416.1V474.2H2398.5zM2416.1 477.5H2433.6V480.8H2416.1zM2433.6 477.5H2451.2V480.8H2433.6zM2433.6 430.5H2451.2V436.0H2433.6zM2451.2 477.5H2468.8V480.8H2451.2zM2451.2 471.0H2468.8V474.2H2451.2zM2468.8 477.5H2486.3V480.8H2468.8zM2468.8 451.0H2486.3V454.0H2468.8zM2486.3 471.0H2503.9V474.2H2486.3zM2503.9 513.2H2521.5V516.4H2503.9zM2503.9 503.4H2521.5V506.6H2503.9zM2503.9 500.2H2521.5V503.4H2503.9zM2503.9 493.7H2521.5V496.9H2503.9zM2503.9 487.2H2521.5V490.5H2503.9zM2679.6 517.2H2697.2V519.2H2679.6zM2785.0 517.2H2802.6V519.2H2785.0zM2978.3 517.2H2995.9V519.2H2978.3zM3048.6 517.2H3066.1V519.2H3048.6zM3083.7 517.2H3101.3V519.2H3083.7zM3118.8 517.2H3136.4V519.2H3118.8zM3136.4 517.2H3154.0V519.2H3136.4zM3400.0 517.2H3417.5V519.2H3400.0zM3487.8 517.2H3505.4V519.2H3487.8z"/><path fill="#3c4d88" d="M1072.0 490.5H1080.8V493.7H1072.0zM1072.0 487.2H1080.8V490.5H1072.0zM1080.8 480.8H1098.4V484.0H1080.8zM1080.8 477.5H1098.4V480.8H1080.8zM1080.8 474.2H1098.4V477.5H1080.8zM1098.4 477.5H1115.9V480.8H1098.4zM1115.9 443.5H1133.5V446.5H1115.9zM1115.9 430.5H1133.5V436.0H1115.9zM1133.5 487.2H1151.1V490.5H1133.5zM1133.5 474.2H1151.1V477.5H1133.5zM1151.1 487.2H1168.6V490.5H1151.1zM1151.1 474.2H1168.6V477.5H1151.1zM1168.6 487.2H1186.2V490.5H1168.6zM1186.2 487.2H1203.8V490.5H1186.2zM1186.2 477.5H1203.8V480.8H1186.2zM1203.8 487.2H1221.3V490.5H1203.8zM1203.8 474.2H1221.3V477.5H1203.8zM1221.3 480.8H1238.9V484.0H1221.3zM1221.3 474.2H1238.9V477.5H1221.3zM1238.9 480.8H1256.5V484.0H1238.9zM1238.9 474.2H1256.5V477.5H1238.9zM1256.5 480.8H1274.0V484.0H1256.5zM1256.5 477.5H1274.0V480.8H1256.5zM1256.5 474.2H1274.0V477.5H1256.5zM1256.5 457.7H1274.0V461.2H1256.5zM1274.0 487.2H1291.6V490.5H1274.0zM1274.0 477.5H1291.6V480.8H1274.0zM1291.6 487.2H1309.2V490.5H1291.6zM1291.6 480.8H1309.2V484.0H1291.6zM1309.2 474.2H1326.8V477.5H1309.2zM1326.8 477.5H1344.3V480.8H1326.8zM1344.3 474.2H1361.9V477.5H1344.3zM1361.9 474.2H1379.5V477.5H1361.9zM1379.5 480.8H1397.0V484.0H1379.5zM1379.5 430.5H1397.0V436.0H1379.5zM1397.0 480.8H1414.6V484.0H1397.0zM1414.6 480.8H1432.2V484.0H1414.6zM1432.2 474.2H1449.7V477.5H1432.2zM1432.2 430.5H1449.7V436.0H1432.2zM1467.3 480.8H1484.9V484.0H1467.3zM1467.3 474.2H1484.9V477.5H1467.3zM1484.9 477.5H1502.5V480.8H1484.9zM1520.0 471.0H1537.6V474.2H1520.0zM1555.2 471.0H1572.7V474.2H1555.2zM1572.7 471.0H1590.3V474.2H1572.7zM1572.7 431.7H1590.3V434.7H1572.7zM1590.3 471.0H1607.9V474.2H1590.3zM1607.9 430.5H1625.4V436.0H1607.9zM1695.7 477.5H1713.3V480.8H1695.7zM1748.4 471.0H1766.0V474.2H1748.4zM1766.0 474.2H1783.6V477.5H1766.0zM1783.6 477.5H1801.1V480.8H1783.6zM1801.1 477.5H1818.7V480.8H1801.1zM1801.1 474.2H1818.7V477.5H1801.1zM1818.7 471.0H1836.3V474.2H1818.7zM1836.3 471.0H1853.8V474.2H1836.3zM1871.4 474.2H1889.0V477.5H1871.4zM1871.4 471.0H1889.0V474.2H1871.4zM1871.4 430.5H1889.0V436.0H1871.4zM1924.1 477.5H1941.7V480.8H1924.1zM1924.1 471.0H1941.7V474.2H1924.1zM1941.7 371.6H1959.3V378.1H1941.7zM1959.3 477.5H1976.8V480.8H1959.3zM1959.3 471.0H1976.8V474.2H1959.3zM1976.8 423.9H1994.4V426.9H1976.8zM1994.4 474.2H2012.0V477.5H1994.4zM2029.5 471.0H2047.1V474.2H2029.5zM2029.5 413.6H2047.1V417.1H2029.5zM2047.1 474.2H2064.7V477.5H2047.1zM2064.7 471.0H2082.2V474.2H2064.7zM2082.2 471.0H2099.8V474.2H2082.2zM2099.8 477.5H2117.4V480.8H2099.8zM2099.8 471.0H2117.4V474.2H2099.8zM2099.8 430.5H2117.4V436.0H2099.8zM2135.0 477.5H2152.5V480.8H2135.0zM2152.5 471.0H2170.1V474.2H2152.5zM2170.1 471.0H2187.7V474.2H2170.1zM2170.1 456.3H2187.7V459.3H2170.1zM2187.7 471.0H2205.2V474.2H2187.7zM2205.2 471.0H2222.8V474.2H2205.2zM2222.8 471.0H2240.4V474.2H2222.8zM2240.4 474.2H2257.9V477.5H2240.4zM2240.4 387.4H2257.9V390.4H2240.4zM2240.4 430.5H2257.9V436.0H2240.4zM2257.9 477.5H2275.5V480.8H2257.9zM2257.9 474.2H2275.5V477.5H2257.9zM2275.5 474.2H2293.1V477.5H2275.5zM2275.5 460.8H2293.1V463.8H2275.5zM2293.1 474.2H2310.6V477.5H2293.1zM2293.1 445.7H2310.6V448.7H2293.1zM2293.1 430.5H2310.6V436.0H2293.1zM2310.6 480.8H2328.2V484.0H2310.6zM2310.6 477.5H2328.2V480.8H2310.6zM2310.6 474.2H2328.2V477.5H2310.6zM2328.2 480.8H2345.8V484.0H2328.2zM2328.2 477.5H2345.8V480.8H2328.2zM2328.2 474.2H2345.8V477.5H2328.2zM2345.8 480.8H2363.4V484.0H2345.8zM2345.8 477.5H2363.4V480.8H2345.8zM2345.8 436.9H2363.4V440.9H2345.8zM2363.4 484.0H2380.9V487.2H2363.4zM2363.4 474.2H2380.9V477.5H2363.4zM2380.9 480.8H2398.5V484.0H2380.9zM2398.5 487.2H2416.1V490.5H2398.5zM2398.5 484.0H2416.1V487.2H2398.5zM2398.5 477.5H2416.1V480.8H2398.5zM2451.2 474.2H2468.8V477.5H2451.2zM2468.8 474.2H2486.3V477.5H2468.8zM2486.3 474.2H2503.9V477.5H2486.3zM2503.9 506.6H2521.5V509.9H2503.9zM2503.9 496.9H2521.5V500.2H2503.9zM2503.9 490.5H2521.5V493.7H2503.9zM2539.0 505.2H2556.6V509.2H2539.0zM2574.2 497.0H2591.8V501.0H2574.2zM2574.2 506.7H2591.8V510.7H2574.2zM2609.3 517.2H2626.9V519.2H2609.3zM2662.0 507.4H2679.6V511.4H2662.0zM2662.0 478.4H2679.6V481.9H2662.0zM2679.6 500.2H2697.2V504.2H2679.6zM2679.6 496.1H2697.2V499.6H2679.6zM2732.3 517.2H2749.9V519.2H2732.3zM2732.3 509.7H2749.9V515.7H2732.3zM2785.0 505.0H2802.6V508.0H2785.0zM2820.2 512.4H2837.7V516.4H2820.2zM2855.3 517.2H2872.9V519.2H2855.3zM2943.1 501.4H2960.7V505.4H2943.1zM2978.3 483.8H2995.9V487.3H2978.3zM3013.4 517.2H3031.0V519.2H3013.4zM3013.4 484.0H3031.0V487.5H3013.4zM3154.0 517.2H3171.5V519.2H3154.0zM3154.0 484.1H3171.5V487.1H3154.0zM3189.1 517.2H3206.7V519.2H3189.1zM3259.4 517.2H3277.0V519.2H3259.4zM3277.0 517.2H3294.5V519.2H3277.0zM3277.0 484.0H3294.5V487.5H3277.0zM3312.1 503.2H3329.7V509.2H3312.1zM3329.7 491.5H3347.2V495.5H3329.7zM3347.2 517.2H3364.8V519.2H3347.2zM3435.1 511.7H3452.7V514.7H3435.1zM3470.2 484.0H3487.8V487.5H3470.2zM3522.9 517.2H3540.5V519.2H3522.9zM3540.5 517.2H3558.1V519.2H3540.5zM3558.1 517.2H3575.6V519.2H3558.1z"/><path fill="#2f6a8c" d="M1072.0 506.6H1080.8V509.9H1072.0zM1072.0 493.7H1080.8V496.9H1072.0zM1072.0 484.0H1080.8V487.2H1072.0zM1080.8 506.6H1098.4V509.9H1080.8zM1080.8 493.7H1098.4V496.9H1080.8zM1080.8 490.5H1098.4V493.7H1080.8zM1080.8 487.2H1098.4V490.5H1080.8zM1098.4 500.2H1115.9V503.4H1098.4zM1098.4 487.2H1115.9V490.5H1098.4zM1098.4 480.8H1115.9V484.0H1098.4zM1115.9 506.6H1133.5V509.9H1115.9zM1115.9 487.2H1133.5V490.5H1115.9zM1115.9 480.8H1133.5V484.0H1115.9zM1115.9 477.5H1133.5V480.8H1115.9zM1133.5 480.8H1151.1V484.0H1133.5zM1133.5 477.5H1151.1V480.8H1133.5zM1151.1 480.8H1168.6V484.0H1151.1zM1168.6 480.8H1186.2V484.0H1168.6zM1168.6 477.5H1186.2V480.8H1168.6zM1186.2 480.8H1203.8V484.0H1186.2zM1203.8 480.8H1221.3V484.0H1203.8zM1221.3 493.7H1238.9V496.9H1221.3zM1221.3 487.2H1238.9V490.5H1221.3zM1221.3 477.5H1238.9V480.8H1221.3zM1238.9 493.7H1256.5V496.9H1238.9zM1238.9 487.2H1256.5V490.5H1238.9zM1238.9 477.5H1256.5V480.8H1238.9zM1256.5 487.2H1274.0V490.5H1256.5zM1274.0 484.0H1291.6V487.2H1274.0zM1274.0 480.8H1291.6V484.0H1274.0zM1291.6 506.6H1309.2V509.9H1291.6zM1291.6 500.2H1309.2V503.4H1291.6zM1291.6 477.5H1309.2V480.8H1291.6zM1309.2 487.2H1326.8V490.5H1309.2zM1309.2 480.8H1326.8V484.0H1309.2zM1309.2 477.5H1326.8V480.8H1309.2zM1326.8 487.2H1344.3V490.5H1326.8zM1326.8 480.8H1344.3V484.0H1326.8zM1344.3 487.2H1361.9V490.5H1344.3zM1344.3 480.8H1361.9V484.0H1344.3zM1344.3 477.5H1361.9V480.8H1344.3zM1361.9 487.2H1379.5V490.5H1361.9zM1361.9 480.8H1379.5V484.0H1361.9zM1361.9 477.5H1379.5V480.8H1361.9zM1379.5 493.7H1397.0V496.9H1379.5zM1379.5 490.5H1397.0V493.7H1379.5zM1379.5 487.2H1397.0V490.5H1379.5zM1379.5 484.0H1397.0V487.2H1379.5zM1379.5 477.5H1397.0V480.8H1379.5zM1397.0 493.7H1414.6V496.9H1397.0zM1397.0 490.5H1414.6V493.7H1397.0zM1397.0 487.2H1414.6V490.5H1397.0zM1397.0 484.0H1414.6V487.2H1397.0zM1414.6 493.7H1432.2V496.9H1414.6zM1414.6 490.5H1432.2V493.7H1414.6zM1414.6 487.2H1432.2V490.5H1414.6zM1414.6 484.0H1432.2V487.2H1414.6zM1414.6 477.5H1432.2V480.8H1414.6zM1432.2 500.2H1449.7V503.4H1432.2zM1432.2 493.7H1449.7V496.9H1432.2zM1432.2 487.2H1449.7V490.5H1432.2zM1432.2 484.0H1449.7V487.2H1432.2zM1432.2 480.8H1449.7V484.0H1432.2zM1432.2 477.5H1449.7V480.8H1432.2zM1449.7 500.2H1467.3V503.4H1449.7zM1449.7 493.7H1467.3V496.9H1449.7zM1449.7 487.2H1467.3V490.5H1449.7zM1449.7 484.0H1467.3V487.2H1449.7zM1449.7 480.8H1467.3V484.0H1449.7zM1449.7 477.5H1467.3V480.8H1449.7zM1467.3 500.2H1484.9V503.4H1467.3zM1467.3 493.7H1484.9V496.9H1467.3zM1467.3 487.2H1484.9V490.5H1467.3zM1484.9 474.2H1502.5V477.5H1484.9zM1502.5 477.5H1520.0V480.8H1502.5zM1520.0 474.2H1537.6V477.5H1520.0zM1537.6 477.5H1555.2V480.8H1537.6zM1555.2 474.2H1572.7V477.5H1555.2zM1607.9 474.2H1625.4V477.5H1607.9zM1625.4 477.5H1643.0V480.8H1625.4zM1625.4 474.2H1643.0V477.5H1625.4zM1643.0 474.2H1660.6V477.5H1643.0zM1660.6 474.2H1678.1V477.5H1660.6zM1678.1 474.2H1695.7V477.5H1678.1zM1748.4 477.5H1766.0V480.8H1748.4zM1818.7 474.2H1836.3V477.5H1818.7zM1836.3 474.2H1853.8V477.5H1836.3zM1853.8 474.2H1871.4V477.5H1853.8zM1906.5 477.5H1924.1V480.8H1906.5zM1924.1 474.2H1941.7V477.5H1924.1zM1941.7 474.2H1959.3V477.5H1941.7zM1994.4 477.5H2012.0V480.8H1994.4zM2012.0 477.5H2029.5V480.8H2012.0zM2012.0 474.2H2029.5V477.5H2012.0zM2064.7 474.2H2082.2V477.5H2064.7zM2082.2 477.5H2099.8V480.8H2082.2zM2082.2 474.2H2099.8V477.5H2082.2zM2099.8 474.2H2117.4V477.5H2099.8zM2117.4 477.5H2135.0V480.8H2117.4zM2152.5 477.5H2170.1V480.8H2152.5zM2152.5 474.2H2170.1V477.5H2152.5zM2170.1 474.2H2187.7V477.5H2170.1zM2187.7 474.2H2205.2V477.5H2187.7zM2205.2 474.2H2222.8V477.5H2205.2zM2222.8 474.2H2240.4V477.5H2222.8zM2240.4 487.2H2257.9V490.5H2240.4zM2240.4 480.8H2257.9V484.0H2240.4zM2257.9 487.2H2275.5V490.5H2257.9zM2257.9 480.8H2275.5V484.0H2257.9zM2275.5 496.9H2293.1V500.2H2275.5zM2275.5 487.2H2293.1V490.5H2275.5zM2275.5 484.0H2293.1V487.2H2275.5zM2275.5 480.8H2293.1V484.0H2275.5zM2293.1 496.9H2310.6V500.2H2293.1zM2293.1 487.2H2310.6V490.5H2293.1zM2293.1 484.0H2310.6V487.2H2293.1zM2293.1 480.8H2310.6V484.0H2293.1zM2310.6 493.7H2328.2V496.9H2310.6zM2310.6 487.2H2328.2V490.5H2310.6zM2310.6 484.0H2328.2V487.2H2310.6zM2328.2 493.7H2345.8V496.9H2328.2zM2328.2 487.2H2345.8V490.5H2328.2zM2328.2 484.0H2345.8V487.2H2328.2zM2345.8 493.7H2363.4V496.9H2345.8zM2345.8 487.2H2363.4V490.5H2345.8zM2345.8 484.0H2363.4V487.2H2345.8zM2363.4 493.7H2380.9V496.9H2363.4zM2363.4 490.5H2380.9V493.7H2363.4zM2363.4 487.2H2380.9V490.5H2363.4zM2363.4 480.8H2380.9V484.0H2363.4zM2380.9 487.2H2398.5V490.5H2380.9zM2380.9 484.0H2398.5V487.2H2380.9zM2398.5 503.4H2416.1V506.6H2398.5zM2398.5 496.9H2416.1V500.2H2398.5zM2398.5 490.5H2416.1V493.7H2398.5zM2398.5 480.8H2416.1V484.0H2398.5zM2416.1 490.5H2433.6V493.7H2416.1zM2416.1 487.2H2433.6V490.5H2416.1zM2416.1 484.0H2433.6V487.2H2416.1zM2416.1 480.8H2433.6V484.0H2416.1zM2433.6 490.5H2451.2V493.7H2433.6zM2433.6 487.2H2451.2V490.5H2433.6zM2433.6 484.0H2451.2V487.2H2433.6zM2433.6 480.8H2451.2V484.0H2433.6zM2451.2 496.9H2468.8V500.2H2451.2zM2451.2 487.2H2468.8V490.5H2451.2zM2451.2 484.0H2468.8V487.2H2451.2zM2451.2 480.8H2468.8V484.0H2451.2zM2468.8 496.9H2486.3V500.2H2468.8zM2468.8 487.2H2486.3V490.5H2468.8zM2468.8 484.0H2486.3V487.2H2468.8zM2468.8 480.8H2486.3V484.0H2468.8zM2486.3 496.9H2503.9V500.2H2486.3zM2486.3 487.2H2503.9V490.5H2486.3zM2486.3 484.0H2503.9V487.2H2486.3zM2486.3 480.8H2503.9V484.0H2486.3zM2503.9 509.9H2521.5V513.2H2503.9zM2503.9 484.0H2521.5V487.2H2503.9z"/><path fill="#27808c" d="M1072.0 516.4H1080.8V519.7H1072.0zM1072.0 513.2H1080.8V516.4H1072.0zM1072.0 509.9H1080.8V513.2H1072.0zM1072.0 503.4H1080.8V506.6H1072.0zM1072.0 500.2H1080.8V503.4H1072.0zM1072.0 496.9H1080.8V500.2H1072.0zM1080.8 513.2H1098.4V516.4H1080.8zM1080.8 509.9H1098.4V513.2H1080.8zM1080.8 500.2H1098.4V503.4H1080.8zM1080.8 496.9H1098.4V500.2H1080.8zM1080.8 484.0H1098.4V487.2H1080.8zM1098.4 509.9H1115.9V513.2H1098.4zM1098.4 493.7H1115.9V496.9H1098.4zM1098.4 490.5H1115.9V493.7H1098.4zM1098.4 484.0H1115.9V487.2H1098.4zM1115.9 503.4H1133.5V506.6H1115.9zM1115.9 496.9H1133.5V500.2H1115.9zM1115.9 493.7H1133.5V496.9H1115.9zM1115.9 490.5H1133.5V493.7H1115.9zM1115.9 484.0H1133.5V487.2H1115.9zM1133.5 509.9H1151.1V513.2H1133.5zM1133.5 506.6H1151.1V509.9H1133.5zM1133.5 500.2H1151.1V503.4H1133.5zM1133.5 493.7H1151.1V496.9H1133.5zM1133.5 490.5H1151.1V493.7H1133.5zM1133.5 484.0H1151.1V487.2H1133.5zM1151.1 509.9H1168.6V513.2H1151.1zM1151.1 506.6H1168.6V509.9H1151.1zM1151.1 500.2H1168.6V503.4H1151.1zM1151.1 493.7H1168.6V496.9H1151.1zM1151.1 490.5H1168.6V493.7H1151.1zM1151.1 484.0H1168.6V487.2H1151.1zM1168.6 509.9H1186.2V513.2H1168.6zM1168.6 506.6H1186.2V509.9H1168.6zM1168.6 500.2H1186.2V503.4H1168.6zM1168.6 493.7H1186.2V496.9H1168.6zM1168.6 490.5H1186.2V493.7H1168.6zM1168.6 484.0H1186.2V487.2H1168.6zM1186.2 509.9H1203.8V513.2H1186.2zM1186.2 506.6H1203.8V509.9H1186.2zM1186.2 500.2H1203.8V503.4H1186.2zM1186.2 493.7H1203.8V496.9H1186.2zM1186.2 490.5H1203.8V493.7H1186.2zM1186.2 484.0H1203.8V487.2H1186.2zM1203.8 509.9H1221.3V513.2H1203.8zM1203.8 506.6H1221.3V509.9H1203.8zM1203.8 500.2H1221.3V503.4H1203.8zM1203.8 493.7H1221.3V496.9H1203.8zM1203.8 490.5H1221.3V493.7H1203.8zM1203.8 484.0H1221.3V487.2H1203.8zM1221.3 506.6H1238.9V509.9H1221.3zM1221.3 500.2H1238.9V503.4H1221.3zM1221.3 490.5H1238.9V493.7H1221.3zM1238.9 506.6H1256.5V509.9H1238.9zM1238.9 500.2H1256.5V503.4H1238.9zM1238.9 490.5H1256.5V493.7H1238.9zM1256.5 506.6H1274.0V509.9H1256.5zM1256.5 500.2H1274.0V503.4H1256.5zM1256.5 493.7H1274.0V496.9H1256.5zM1256.5 484.0H1274.0V487.2H1256.5zM1274.0 509.9H1291.6V513.2H1274.0zM1274.0 506.6H1291.6V509.9H1274.0zM1274.0 503.4H1291.6V506.6H1274.0zM1274.0 500.2H1291.6V503.4H1274.0zM1274.0 493.7H1291.6V496.9H1274.0zM1274.0 490.5H1291.6V493.7H1274.0zM1291.6 509.9H1309.2V513.2H1291.6zM1291.6 493.7H1309.2V496.9H1291.6zM1291.6 490.5H1309.2V493.7H1291.6zM1291.6 484.0H1309.2V487.2H1291.6zM1309.2 513.2H1326.8V516.4H1309.2zM1309.2 506.6H1326.8V509.9H1309.2zM1309.2 500.2H1326.8V503.4H1309.2zM1309.2 493.7H1326.8V496.9H1309.2zM1309.2 484.0H1326.8V487.2H1309.2zM1326.8 513.2H1344.3V516.4H1326.8zM1326.8 506.6H1344.3V509.9H1326.8zM1326.8 500.2H1344.3V503.4H1326.8zM1326.8 493.7H1344.3V496.9H1326.8zM1326.8 484.0H1344.3V487.2H1326.8zM1344.3 513.2H1361.9V516.4H1344.3zM1344.3 506.6H1361.9V509.9H1344.3zM1344.3 500.2H1361.9V503.4H1344.3zM1344.3 493.7H1361.9V496.9H1344.3zM1344.3 484.0H1361.9V487.2H1344.3zM1361.9 513.2H1379.5V516.4H1361.9zM1361.9 506.6H1379.5V509.9H1361.9zM1361.9 500.2H1379.5V503.4H1361.9zM1361.9 493.7H1379.5V496.9H1361.9zM1361.9 484.0H1379.5V487.2H1361.9zM1379.5 513.2H1397.0V516.4H1379.5zM1379.5 509.9H1397.0V513.2H1379.5zM1379.5 503.4H1397.0V506.6H1379.5zM1397.0 513.2H1414.6V516.4H1397.0zM1397.0 509.9H1414.6V513.2H1397.0zM1397.0 503.4H1414.6V506.6H1397.0zM1414.6 513.2H1432.2V516.4H1414.6zM1414.6 509.9H1432.2V513.2H1414.6zM1414.6 503.4H1432.2V506.6H1414.6zM1432.2 506.6H1449.7V509.9H1432.2zM1432.2 490.5H1449.7V493.7H1432.2zM1449.7 506.6H1467.3V509.9H1449.7zM1449.7 490.5H1467.3V493.7H1449.7zM1467.3 509.9H1484.9V513.2H1467.3zM1467.3 506.6H1484.9V509.9H1467.3zM1467.3 503.4H1484.9V506.6H1467.3zM1467.3 496.9H1484.9V500.2H1467.3zM1467.3 490.5H1484.9V493.7H1467.3zM1467.3 484.0H1484.9V487.2H1467.3zM1484.9 500.2H1502.5V503.4H1484.9zM1484.9 496.9H1502.5V500.2H1484.9zM1484.9 493.7H1502.5V496.9H1484.9zM1484.9 480.8H1502.5V484.0H1484.9zM1502.5 490.5H1520.0V493.7H1502.5zM1520.0 506.6H1537.6V509.9H1520.0zM1537.6 506.6H1555.2V509.9H1537.6zM1555.2 506.6H1572.7V509.9H1555.2zM1555.2 477.5H1572.7V480.8H1555.2zM1572.7 506.6H1590.3V509.9H1572.7zM1572.7 477.5H1590.3V480.8H1572.7zM1590.3 496.9H1607.9V500.2H1590.3zM1607.9 500.2H1625.4V503.4H1607.9zM1607.9 490.5H1625.4V493.7H1607.9zM1607.9 487.2H1625.4V490.5H1607.9zM1607.9 477.5H1625.4V480.8H1607.9zM1625.4 490.5H1643.0V493.7H1625.4zM1625.4 487.2H1643.0V490.5H1625.4zM1625.4 480.8H1643.0V484.0H1625.4zM1643.0 490.5H1660.6V493.7H1643.0zM1643.0 487.2H1660.6V490.5H1643.0zM1643.0 480.8H1660.6V484.0H1643.0zM1643.0 477.5H1660.6V480.8H1643.0zM1660.6 490.5H1678.1V493.7H1660.6zM1660.6 487.2H1678.1V490.5H1660.6zM1660.6 480.8H1678.1V484.0H1660.6zM1660.6 477.5H1678.1V480.8H1660.6zM1678.1 490.5H1695.7V493.7H1678.1zM1678.1 487.2H1695.7V490.5H1678.1zM1678.1 480.8H1695.7V484.0H1678.1zM1678.1 477.5H1695.7V480.8H1678.1zM1695.7 490.5H1713.3V493.7H1695.7zM1695.7 487.2H1713.3V490.5H1695.7zM1695.7 480.8H1713.3V484.0H1695.7zM1713.3 496.9H1730.9V500.2H1713.3zM1713.3 493.7H1730.9V496.9H1713.3zM1713.3 477.5H1730.9V480.8H1713.3zM1730.9 480.8H1748.4V484.0H1730.9zM1730.9 477.5H1748.4V480.8H1730.9zM1748.4 487.2H1766.0V490.5H1748.4zM1748.4 480.8H1766.0V484.0H1748.4zM1766.0 500.2H1783.6V503.4H1766.0zM1766.0 487.2H1783.6V490.5H1766.0zM1766.0 477.5H1783.6V480.8H1766.0zM1783.6 500.2H1801.1V503.4H1783.6zM1783.6 480.8H1801.1V484.0H1783.6zM1801.1 500.2H1818.7V503.4H1801.1zM1801.1 480.8H1818.7V484.0H1801.1zM1818.7 500.2H1836.3V503.4H1818.7zM1818.7 496.9H1836.3V500.2H1818.7zM1818.7 493.7H1836.3V496.9H1818.7zM1818.7 487.2H1836.3V490.5H1818.7zM1818.7 477.5H1836.3V480.8H1818.7zM1836.3 500.2H1853.8V503.4H1836.3zM1836.3 496.9H1853.8V500.2H1836.3zM1836.3 493.7H1853.8V496.9H1836.3zM1836.3 487.2H1853.8V490.5H1836.3zM1853.8 500.2H1871.4V503.4H1853.8zM1853.8 496.9H1871.4V500.2H1853.8zM1853.8 493.7H1871.4V496.9H1853.8zM1853.8 487.2H1871.4V490.5H1853.8zM1871.4 477.5H1889.0V480.8H1871.4zM1889.0 487.2H1906.5V490.5H1889.0zM1906.5 487.2H1924.1V490.5H1906.5zM1924.1 487.2H1941.7V490.5H1924.1zM1941.7 487.2H1959.3V490.5H1941.7zM1959.3 487.2H1976.8V490.5H1959.3zM1976.8 506.6H1994.4V509.9H1976.8zM1994.4 493.7H2012.0V496.9H1994.4zM1994.4 490.5H2012.0V493.7H1994.4zM2012.0 496.9H2029.5V500.2H2012.0zM2012.0 493.7H2029.5V496.9H2012.0zM2012.0 490.5H2029.5V493.7H2012.0zM2012.0 480.8H2029.5V484.0H2012.0zM2029.5 500.2H2047.1V503.4H2029.5zM2029.5 490.5H2047.1V493.7H2029.5zM2029.5 477.5H2047.1V480.8H2029.5zM2047.1 500.2H2064.7V503.4H2047.1zM2047.1 490.5H2064.7V493.7H2047.1zM2064.7 496.9H2082.2V500.2H2064.7zM2064.7 490.5H2082.2V493.7H2064.7zM2064.7 480.8H2082.2V484.0H2064.7zM2082.2 496.9H2099.8V500.2H2082.2zM2082.2 490.5H2099.8V493.7H2082.2zM2082.2 480.8H2099.8V484.0H2082.2zM2099.8 500.2H2117.4V503.4H2099.8zM2099.8 487.2H2117.4V490.5H2099.8zM2117.4 500.2H2135.0V503.4H2117.4zM2117.4 487.2H2135.0V490.5H2117.4zM2135.0 500.2H2152.5V503.4H2135.0zM2135.0 487.2H2152.5V490.5H2135.0zM2152.5 500.2H2170.1V503.4H2152.5zM2152.5 487.2H2170.1V490.5H2152.5zM2170.1 490.5H2187.7V493.7H2170.1zM2170.1 477.5H2187.7V480.8H2170.1zM2187.7 490.5H2205.2V493.7H2187.7zM2205.2 490.5H2222.8V493.7H2205.2zM2205.2 477.5H2222.8V480.8H2205.2zM2222.8 477.5H2240.4V480.8H2222.8zM2240.4 509.9H2257.9V513.2H2240.4zM2240.4 503.4H2257.9V506.6H2240.4zM2240.4 496.9H2257.9V500.2H2240.4zM2240.4 493.7H2257.9V496.9H2240.4zM2240.4 484.0H2257.9V487.2H2240.4zM2257.9 509.9H2275.5V513.2H2257.9zM2257.9 503.4H2275.5V506.6H2257.9zM2257.9 496.9H2275.5V500.2H2257.9zM2257.9 493.7H2275.5V496.9H2257.9zM2257.9 484.0H2275.5V487.2H2257.9zM2275.5 509.9H2293.1V513.2H2275.5zM2275.5 506.6H2293.1V509.9H2275.5zM2275.5 503.4H2293.1V506.6H2275.5zM2275.5 493.7H2293.1V496.9H2275.5zM2275.5 490.5H2293.1V493.7H2275.5zM2293.1 509.9H2310.6V513.2H2293.1zM2293.1 506.6H2310.6V509.9H2293.1zM2293.1 503.4H2310.6V506.6H2293.1zM2293.1 493.7H2310.6V496.9H2293.1zM2293.1 490.5H2310.6V493.7H2293.1zM2310.6 509.9H2328.2V513.2H2310.6zM2310.6 503.4H2328.2V506.6H2310.6zM2310.6 490.5H2328.2V493.7H2310.6zM2328.2 509.9H2345.8V513.2H2328.2zM2328.2 503.4H2345.8V506.6H2328.2zM2328.2 490.5H2345.8V493.7H2328.2zM2345.8 509.9H2363.4V513.2H2345.8zM2345.8 503.4H2363.4V506.6H2345.8zM2345.8 490.5H2363.4V493.7H2345.8zM2363.4 506.6H2380.9V509.9H2363.4zM2363.4 503.4H2380.9V506.6H2363.4zM2363.4 496.9H2380.9V500.2H2363.4zM2380.9 509.9H2398.5V513.2H2380.9zM2380.9 503.4H2398.5V506.6H2380.9zM2380.9 500.2H2398.5V503.4H2380.9zM2380.9 493.7H2398.5V496.9H2380.9zM2398.5 493.7H2416.1V496.9H2398.5zM2416.1 509.9H2433.6V513.2H2416.1zM2416.1 503.4H2433.6V506.6H2416.1zM2416.1 500.2H2433.6V503.4H2416.1zM2416.1 496.9H2433.6V500.2H2416.1zM2416.1 493.7H2433.6V496.9H2416.1zM2433.6 509.9H2451.2V513.2H2433.6zM2433.6 503.4H2451.2V506.6H2433.6zM2433.6 500.2H2451.2V503.4H2433.6zM2433.6 496.9H2451.2V500.2H2433.6zM2433.6 493.7H2451.2V496.9H2433.6zM2451.2 509.9H2468.8V513.2H2451.2zM2451.2 506.6H2468.8V509.9H2451.2zM2451.2 493.7H2468.8V496.9H2451.2zM2451.2 490.5H2468.8V493.7H2451.2zM2468.8 509.9H2486.3V513.2H2468.8zM2468.8 506.6H2486.3V509.9H2468.8zM2468.8 493.7H2486.3V496.9H2468.8zM2468.8 490.5H2486.3V493.7H2468.8zM2486.3 509.9H2503.9V513.2H2486.3zM2486.3 506.6H2503.9V509.9H2486.3zM2486.3 493.7H2503.9V496.9H2486.3zM2486.3 490.5H2503.9V493.7H2486.3zM2837.7 517.2H2855.3V519.2H2837.7zM2890.4 517.2H2908.0V519.2H2890.4zM3101.3 517.2H3118.8V519.2H3101.3zM3241.8 517.2H3259.4V519.2H3241.8zM3382.4 517.2H3400.0V519.2H3382.4zM3452.7 517.2H3470.2V519.2H3452.7zM3575.6 517.2H3593.2V519.2H3575.6z"/><path fill="#229a88" d="M1080.8 503.4H1098.4V506.6H1080.8zM1098.4 513.2H1115.9V516.4H1098.4zM1098.4 506.6H1115.9V509.9H1098.4zM1098.4 503.4H1115.9V506.6H1098.4zM1115.9 513.2H1133.5V516.4H1115.9zM1115.9 509.9H1133.5V513.2H1115.9zM1115.9 500.2H1133.5V503.4H1115.9zM1133.5 513.2H1151.1V516.4H1133.5zM1133.5 503.4H1151.1V506.6H1133.5zM1133.5 496.9H1151.1V500.2H1133.5zM1151.1 513.2H1168.6V516.4H1151.1zM1151.1 503.4H1168.6V506.6H1151.1zM1151.1 496.9H1168.6V500.2H1151.1zM1168.6 513.2H1186.2V516.4H1168.6zM1168.6 503.4H1186.2V506.6H1168.6zM1168.6 496.9H1186.2V500.2H1168.6zM1186.2 513.2H1203.8V516.4H1186.2zM1186.2 503.4H1203.8V506.6H1186.2zM1186.2 496.9H1203.8V500.2H1186.2zM1203.8 513.2H1221.3V516.4H1203.8zM1203.8 503.4H1221.3V506.6H1203.8zM1203.8 496.9H1221.3V500.2H1203.8zM1221.3 513.2H1238.9V516.4H1221.3zM1221.3 509.9H1238.9V513.2H1221.3zM1221.3 503.4H1238.9V506.6H1221.3zM1221.3 496.9H1238.9V500.2H1221.3zM1221.3 484.0H1238.9V487.2H1221.3zM1238.9 513.2H1256.5V516.4H1238.9zM1238.9 509.9H1256.5V513.2H1238.9zM1238.9 503.4H1256.5V506.6H1238.9zM1238.9 496.9H1256.5V500.2H1238.9zM1238.9 484.0H1256.5V487.2H1238.9zM1256.5 513.2H1274.0V516.4H1256.5zM1256.5 503.4H1274.0V506.6H1256.5zM1256.5 496.9H1274.0V500.2H1256.5zM1256.5 490.5H1274.0V493.7H1256.5zM1274.0 513.2H1291.6V516.4H1274.0zM1274.0 496.9H1291.6V500.2H1274.0zM1291.6 513.2H1309.2V516.4H1291.6zM1291.6 503.4H1309.2V506.6H1291.6zM1291.6 496.9H1309.2V500.2H1291.6zM1309.2 509.9H1326.8V513.2H1309.2zM1309.2 503.4H1326.8V506.6H1309.2zM1309.2 496.9H1326.8V500.2H1309.2zM1309.2 490.5H1326.8V493.7H1309.2zM1326.8 509.9H1344.3V513.2H1326.8zM1326.8 503.4H1344.3V506.6H1326.8zM1326.8 496.9H1344.3V500.2H1326.8zM1326.8 490.5H1344.3V493.7H1326.8zM1344.3 509.9H1361.9V513.2H1344.3zM1344.3 503.4H1361.9V506.6H1344.3zM1344.3 496.9H1361.9V500.2H1344.3zM1344.3 490.5H1361.9V493.7H1344.3zM1361.9 509.9H1379.5V513.2H1361.9zM1361.9 503.4H1379.5V506.6H1361.9zM1361.9 496.9H1379.5V500.2H1361.9zM1361.9 490.5H1379.5V493.7H1361.9zM1379.5 506.6H1397.0V509.9H1379.5zM1379.5 500.2H1397.0V503.4H1379.5zM1379.5 496.9H1397.0V500.2H1379.5zM1397.0 506.6H1414.6V509.9H1397.0zM1397.0 500.2H1414.6V503.4H1397.0zM1397.0 496.9H1414.6V500.2H1397.0zM1414.6 506.6H1432.2V509.9H1414.6zM1414.6 500.2H1432.2V503.4H1414.6zM1414.6 496.9H1432.2V500.2H1414.6zM1432.2 513.2H1449.7V516.4H1432.2zM1432.2 509.9H1449.7V513.2H1432.2zM1432.2 503.4H1449.7V506.6H1432.2zM1432.2 496.9H1449.7V500.2H1432.2zM1449.7 513.2H1467.3V516.4H1449.7zM1449.7 509.9H1467.3V513.2H1449.7zM1449.7 503.4H1467.3V506.6H1449.7zM1449.7 496.9H1467.3V500.2H1449.7zM1467.3 513.2H1484.9V516.4H1467.3zM1484.9 509.9H1502.5V513.2H1484.9zM1484.9 506.6H1502.5V509.9H1484.9zM1484.9 503.4H1502.5V506.6H1484.9zM1484.9 490.5H1502.5V493.7H1484.9zM1484.9 487.2H1502.5V490.5H1484.9zM1502.5 509.9H1520.0V513.2H1502.5zM1502.5 506.6H1520.0V509.9H1502.5zM1502.5 500.2H1520.0V503.4H1502.5zM1502.5 496.9H1520.0V500.2H1502.5zM1502.5 487.2H1520.0V490.5H1502.5zM1502.5 480.8H1520.0V484.0H1502.5zM1520.0 503.4H1537.6V506.6H1520.0zM1520.0 500.2H1537.6V503.4H1520.0zM1520.0 496.9H1537.6V500.2H1520.0zM1520.0 493.7H1537.6V496.9H1520.0zM1520.0 490.5H1537.6V493.7H1520.0zM1520.0 480.8H1537.6V484.0H1520.0zM1537.6 503.4H1555.2V506.6H1537.6zM1537.6 500.2H1555.2V503.4H1537.6zM1537.6 496.9H1555.2V500.2H1537.6zM1537.6 493.7H1555.2V496.9H1537.6zM1537.6 490.5H1555.2V493.7H1537.6zM1537.6 480.8H1555.2V484.0H1537.6zM1555.2 503.4H1572.7V506.6H1555.2zM1555.2 500.2H1572.7V503.4H1555.2zM1555.2 496.9H1572.7V500.2H1555.2zM1555.2 493.7H1572.7V496.9H1555.2zM1555.2 490.5H1572.7V493.7H1555.2zM1555.2 480.8H1572.7V484.0H1555.2zM1572.7 503.4H1590.3V506.6H1572.7zM1572.7 500.2H1590.3V503.4H1572.7zM1572.7 496.9H1590.3V500.2H1572.7zM1572.7 493.7H1590.3V496.9H1572.7zM1572.7 490.5H1590.3V493.7H1572.7zM1572.7 480.8H1590.3V484.0H1572.7zM1590.3 506.6H1607.9V509.9H1590.3zM1590.3 500.2H1607.9V503.4H1590.3zM1590.3 490.5H1607.9V493.7H1590.3zM1590.3 487.2H1607.9V490.5H1590.3zM1590.3 484.0H1607.9V487.2H1590.3zM1590.3 480.8H1607.9V484.0H1590.3zM1607.9 506.6H1625.4V509.9H1607.9zM1607.9 503.4H1625.4V506.6H1607.9zM1607.9 496.9H1625.4V500.2H1607.9zM1607.9 480.8H1625.4V484.0H1607.9zM1625.4 509.9H1643.0V513.2H1625.4zM1625.4 506.6H1643.0V509.9H1625.4zM1625.4 496.9H1643.0V500.2H1625.4zM1625.4 493.7H1643.0V496.9H1625.4zM1643.0 509.9H1660.6V513.2H1643.0zM1643.0 506.6H1660.6V509.9H1643.0zM1643.0 496.9H1660.6V500.2H1643.0zM1643.0 493.7H1660.6V496.9H1643.0zM1660.6 509.9H1678.1V513.2H1660.6zM1660.6 506.6H1678.1V509.9H1660.6zM1660.6 496.9H1678.1V500.2H1660.6zM1660.6 493.7H1678.1V496.9H1660.6zM1678.1 509.9H1695.7V513.2H1678.1zM1678.1 506.6H1695.7V509.9H1678.1zM1678.1 496.9H1695.7V500.2H1678.1zM1678.1 493.7H1695.7V496.9H1678.1zM1695.7 509.9H1713.3V513.2H1695.7zM1695.7 506.6H1713.3V509.9H1695.7zM1695.7 496.9H1713.3V500.2H1695.7zM1695.7 493.7H1713.3V496.9H1695.7zM1713.3 506.6H1730.9V509.9H1713.3zM1713.3 503.4H1730.9V506.6H1713.3zM1713.3 500.2H1730.9V503.4H1713.3zM1713.3 490.5H1730.9V493.7H1713.3zM1713.3 487.2H1730.9V490.5H1713.3zM1713.3 480.8H1730.9V484.0H1713.3zM1730.9 509.9H1748.4V513.2H1730.9zM1730.9 506.6H1748.4V509.9H1730.9zM1730.9 500.2H1748.4V503.4H1730.9zM1730.9 496.9H1748.4V500.2H1730.9zM1730.9 493.7H1748.4V496.9H1730.9zM1730.9 487.2H1748.4V490.5H1730.9zM1730.9 484.0H1748.4V487.2H1730.9zM1748.4 506.6H1766.0V509.9H1748.4zM1748.4 503.4H1766.0V506.6H1748.4zM1748.4 496.9H1766.0V500.2H1748.4zM1748.4 490.5H1766.0V493.7H1748.4zM1766.0 509.9H1783.6V513.2H1766.0zM1766.0 506.6H1783.6V509.9H1766.0zM1766.0 496.9H1783.6V500.2H1766.0zM1766.0 493.7H1783.6V496.9H1766.0zM1766.0 490.5H1783.6V493.7H1766.0zM1766.0 480.8H1783.6V484.0H1766.0zM1783.6 509.9H1801.1V513.2H1783.6zM1783.6 506.6H1801.1V509.9H1783.6zM1783.6 503.4H1801.1V506.6H1783.6zM1783.6 493.7H1801.1V496.9H1783.6zM1801.1 509.9H1818.7V513.2H1801.1zM1801.1 506.6H1818.7V509.9H1801.1zM1801.1 503.4H1818.7V506.6H1801.1zM1801.1 493.7H1818.7V496.9H1801.1zM1818.7 509.9H1836.3V513.2H1818.7zM1818.7 506.6H1836.3V509.9H1818.7zM1818.7 503.4H1836.3V506.6H1818.7zM1818.7 480.8H1836.3V484.0H1818.7zM1836.3 509.9H1853.8V513.2H1836.3zM1836.3 506.6H1853.8V509.9H1836.3zM1836.3 503.4H1853.8V506.6H1836.3zM1836.3 480.8H1853.8V484.0H1836.3zM1853.8 509.9H1871.4V513.2H1853.8zM1853.8 506.6H1871.4V509.9H1853.8zM1853.8 503.4H1871.4V506.6H1853.8zM1853.8 480.8H1871.4V484.0H1853.8zM1871.4 506.6H1889.0V509.9H1871.4zM1871.4 503.4H1889.0V506.6H1871.4zM1871.4 500.2H1889.0V503.4H1871.4zM1871.4 493.7H1889.0V496.9H1871.4zM1871.4 490.5H1889.0V493.7H1871.4zM1871.4 487.2H1889.0V490.5H1871.4zM1871.4 480.8H1889.0V484.0H1871.4zM1889.0 509.9H1906.5V513.2H1889.0zM1889.0 506.6H1906.5V509.9H1889.0zM1889.0 500.2H1906.5V503.4H1889.0zM1889.0 496.9H1906.5V500.2H1889.0zM1889.0 490.5H1906.5V493.7H1889.0zM1889.0 480.8H1906.5V484.0H1889.0zM1906.5 509.9H1924.1V513.2H1906.5zM1906.5 506.6H1924.1V509.9H1906.5zM1906.5 500.2H1924.1V503.4H1906.5zM1906.5 496.9H1924.1V500.2H1906.5zM1906.5 490.5H1924.1V493.7H1906.5zM1906.5 480.8H1924.1V484.0H1906.5zM1924.1 509.9H1941.7V513.2H1924.1zM1924.1 506.6H1941.7V509.9H1924.1zM1924.1 500.2H1941.7V503.4H1924.1zM1924.1 496.9H1941.7V500.2H1924.1zM1924.1 490.5H1941.7V493.7H1924.1zM1924.1 480.8H1941.7V484.0H1924.1zM1941.7 509.9H1959.3V513.2H1941.7zM1941.7 506.6H1959.3V509.9H1941.7zM1941.7 500.2H1959.3V503.4H1941.7zM1941.7 496.9H1959.3V500.2H1941.7zM1941.7 490.5H1959.3V493.7H1941.7zM1941.7 480.8H1959.3V484.0H1941.7zM1959.3 509.9H1976.8V513.2H1959.3zM1959.3 506.6H1976.8V509.9H1959.3zM1959.3 500.2H1976.8V503.4H1959.3zM1959.3 496.9H1976.8V500.2H1959.3zM1959.3 490.5H1976.8V493.7H1959.3zM1959.3 480.8H1976.8V484.0H1959.3zM1976.8 496.9H1994.4V500.2H1976.8zM1976.8 493.7H1994.4V496.9H1976.8zM1976.8 480.8H1994.4V484.0H1976.8zM1994.4 506.6H2012.0V509.9H1994.4zM1994.4 503.4H2012.0V506.6H1994.4zM1994.4 496.9H2012.0V500.2H1994.4zM1994.4 487.2H2012.0V490.5H1994.4zM1994.4 480.8H2012.0V484.0H1994.4zM2012.0 506.6H2029.5V509.9H2012.0zM2012.0 503.4H2029.5V506.6H2012.0zM2012.0 500.2H2029.5V503.4H2012.0zM2012.0 487.2H2029.5V490.5H2012.0zM2029.5 506.6H2047.1V509.9H2029.5zM2029.5 503.4H2047.1V506.6H2029.5zM2029.5 496.9H2047.1V500.2H2029.5zM2029.5 493.7H2047.1V496.9H2029.5zM2029.5 487.2H2047.1V490.5H2029.5zM2029.5 484.0H2047.1V487.2H2029.5zM2029.5 480.8H2047.1V484.0H2029.5zM2047.1 506.6H2064.7V509.9H2047.1zM2047.1 503.4H2064.7V506.6H2047.1zM2047.1 496.9H2064.7V500.2H2047.1zM2047.1 493.7H2064.7V496.9H2047.1zM2047.1 487.2H2064.7V490.5H2047.1zM2047.1 484.0H2064.7V487.2H2047.1zM2047.1 480.8H2064.7V484.0H2047.1zM2064.7 500.2H2082.2V503.4H2064.7zM2064.7 493.7H2082.2V496.9H2064.7zM2064.7 487.2H2082.2V490.5H2064.7zM2082.2 500.2H2099.8V503.4H2082.2zM2082.2 493.7H2099.8V496.9H2082.2zM2082.2 487.2H2099.8V490.5H2082.2zM2099.8 506.6H2117.4V509.9H2099.8zM2099.8 496.9H2117.4V500.2H2099.8zM2099.8 493.7H2117.4V496.9H2099.8zM2099.8 490.5H2117.4V493.7H2099.8zM2099.8 484.0H2117.4V487.2H2099.8zM2099.8 480.8H2117.4V484.0H2099.8zM2117.4 506.6H2135.0V509.9H2117.4zM2117.4 496.9H2135.0V500.2H2117.4zM2117.4 493.7H2135.0V496.9H2117.4zM2117.4 490.5H2135.0V493.7H2117.4zM2117.4 484.0H2135.0V487.2H2117.4zM2117.4 480.8H2135.0V484.0H2117.4zM2135.0 506.6H2152.5V509.9H2135.0zM2135.0 496.9H2152.5V500.2H2135.0zM2135.0 493.7H2152.5V496.9H2135.0zM2135.0 490.5H2152.5V493.7H2135.0zM2135.0 484.0H2152.5V487.2H2135.0zM2135.0 480.8H2152.5V484.0H2135.0zM2152.5 506.6H2170.1V509.9H2152.5zM2152.5 496.9H2170.1V500.2H2152.5zM2152.5 493.7H2170.1V496.9H2152.5zM2152.5 490.5H2170.1V493.7H2152.5zM2152.5 484.0H2170.1V487.2H2152.5zM2152.5 480.8H2170.1V484.0H2152.5zM2170.1 509.9H2187.7V513.2H2170.1zM2170.1 506.6H2187.7V509.9H2170.1zM2170.1 500.2H2187.7V503.4H2170.1zM2170.1 496.9H2187.7V500.2H2170.1zM2170.1 493.7H2187.7V496.9H2170.1zM2170.1 487.2H2187.7V490.5H2170.1zM2170.1 480.8H2187.7V484.0H2170.1zM2187.7 509.9H2205.2V513.2H2187.7zM2187.7 506.6H2205.2V509.9H2187.7zM2187.7 500.2H2205.2V503.4H2187.7zM2187.7 496.9H2205.2V500.2H2187.7zM2187.7 493.7H2205.2V496.9H2187.7zM2187.7 487.2H2205.2V490.5H2187.7zM2187.7 480.8H2205.2V484.0H2187.7zM2205.2 509.9H2222.8V513.2H2205.2zM2205.2 506.6H2222.8V509.9H2205.2zM2205.2 500.2H2222.8V503.4H2205.2zM2205.2 496.9H2222.8V500.2H2205.2zM2205.2 493.7H2222.8V496.9H2205.2zM2205.2 487.2H2222.8V490.5H2205.2zM2205.2 480.8H2222.8V484.0H2205.2zM2222.8 509.9H2240.4V513.2H2222.8zM2222.8 506.6H2240.4V509.9H2222.8zM2222.8 496.9H2240.4V500.2H2222.8zM2222.8 493.7H2240.4V496.9H2222.8zM2222.8 487.2H2240.4V490.5H2222.8zM2222.8 480.8H2240.4V484.0H2222.8zM2240.4 513.2H2257.9V516.4H2240.4zM2240.4 506.6H2257.9V509.9H2240.4zM2240.4 490.5H2257.9V493.7H2240.4zM2257.9 513.2H2275.5V516.4H2257.9zM2257.9 506.6H2275.5V509.9H2257.9zM2257.9 490.5H2275.5V493.7H2257.9zM2275.5 513.2H2293.1V516.4H2275.5zM2275.5 500.2H2293.1V503.4H2275.5zM2293.1 513.2H2310.6V516.4H2293.1zM2293.1 500.2H2310.6V503.4H2293.1zM2310.6 513.2H2328.2V516.4H2310.6zM2310.6 506.6H2328.2V509.9H2310.6zM2310.6 500.2H2328.2V503.4H2310.6zM2310.6 496.9H2328.2V500.2H2310.6zM2328.2 513.2H2345.8V516.4H2328.2zM2328.2 506.6H2345.8V509.9H2328.2zM2328.2 500.2H2345.8V503.4H2328.2zM2328.2 496.9H2345.8V500.2H2328.2zM2345.8 513.2H2363.4V516.4H2345.8zM2345.8 506.6H2363.4V509.9H2345.8zM2345.8 500.2H2363.4V503.4H2345.8zM2345.8 496.9H2363.4V500.2H2345.8zM2363.4 509.9H2380.9V513.2H2363.4zM2363.4 500.2H2380.9V503.4H2363.4zM2380.9 506.6H2398.5V509.9H2380.9zM2380.9 496.9H2398.5V500.2H2380.9zM2380.9 490.5H2398.5V493.7H2380.9zM2398.5 509.9H2416.1V513.2H2398.5zM2398.5 506.6H2416.1V509.9H2398.5zM2398.5 500.2H2416.1V503.4H2398.5zM2416.1 506.6H2433.6V509.9H2416.1zM2433.6 506.6H2451.2V509.9H2433.6zM2451.2 503.4H2468.8V506.6H2451.2zM2451.2 500.2H2468.8V503.4H2451.2zM2468.8 503.4H2486.3V506.6H2468.8zM2468.8 500.2H2486.3V503.4H2468.8zM2486.3 503.4H2503.9V506.6H2486.3zM2486.3 500.2H2503.9V503.4H2486.3zM2591.8 517.2H2609.3V519.2H2591.8zM2644.5 517.2H2662.0V519.2H2644.5zM2749.9 517.2H2767.5V519.2H2749.9zM2995.9 517.2H3013.4V519.2H2995.9zM3312.1 517.2H3329.7V519.2H3312.1zM3329.7 517.2H3347.2V519.2H3329.7z"/><path fill="#37b074" d="M1072.0 519.7H1080.8V523.0H1072.0zM1098.4 496.9H1115.9V500.2H1098.4zM1256.5 509.9H1274.0V513.2H1256.5zM1484.9 484.0H1502.5V487.2H1484.9zM1502.5 513.2H1520.0V516.4H1502.5zM1502.5 503.4H1520.0V506.6H1502.5zM1502.5 493.7H1520.0V496.9H1502.5zM1502.5 484.0H1520.0V487.2H1502.5zM1520.0 516.4H1537.6V519.7H1520.0zM1520.0 513.2H1537.6V516.4H1520.0zM1520.0 509.9H1537.6V513.2H1520.0zM1520.0 487.2H1537.6V490.5H1520.0zM1520.0 484.0H1537.6V487.2H1520.0zM1537.6 516.4H1555.2V519.7H1537.6zM1537.6 513.2H1555.2V516.4H1537.6zM1537.6 509.9H1555.2V513.2H1537.6zM1537.6 487.2H1555.2V490.5H1537.6zM1537.6 484.0H1555.2V487.2H1537.6zM1555.2 516.4H1572.7V519.7H1555.2zM1555.2 513.2H1572.7V516.4H1555.2zM1555.2 509.9H1572.7V513.2H1555.2zM1555.2 487.2H1572.7V490.5H1555.2zM1555.2 484.0H1572.7V487.2H1555.2zM1572.7 516.4H1590.3V519.7H1572.7zM1572.7 513.2H1590.3V516.4H1572.7zM1572.7 509.9H1590.3V513.2H1572.7zM1572.7 487.2H1590.3V490.5H1572.7zM1572.7 484.0H1590.3V487.2H1572.7zM1590.3 513.2H1607.9V516.4H1590.3zM1590.3 509.9H1607.9V513.2H1590.3zM1590.3 493.7H1607.9V496.9H1590.3zM1607.9 513.2H1625.4V516.4H1607.9zM1607.9 493.7H1625.4V496.9H1607.9zM1607.9 484.0H1625.4V487.2H1607.9zM1625.4 503.4H1643.0V506.6H1625.4zM1625.4 500.2H1643.0V503.4H1625.4zM1625.4 484.0H1643.0V487.2H1625.4zM1643.0 503.4H1660.6V506.6H1643.0zM1643.0 500.2H1660.6V503.4H1643.0zM1643.0 484.0H1660.6V487.2H1643.0zM1660.6 503.4H1678.1V506.6H1660.6zM1660.6 500.2H1678.1V503.4H1660.6zM1660.6 484.0H1678.1V487.2H1660.6zM1678.1 503.4H1695.7V506.6H1678.1zM1678.1 500.2H1695.7V503.4H1678.1zM1678.1 484.0H1695.7V487.2H1678.1zM1695.7 503.4H1713.3V506.6H1695.7zM1695.7 500.2H1713.3V503.4H1695.7zM1695.7 484.0H1713.3V487.2H1695.7zM1713.3 513.2H1730.9V516.4H1713.3zM1713.3 509.9H1730.9V513.2H1713.3zM1713.3 484.0H1730.9V487.2H1713.3zM1730.9 503.4H1748.4V506.6H1730.9zM1730.9 490.5H1748.4V493.7H1730.9zM1748.4 509.9H1766.0V513.2H1748.4zM1748.4 500.2H1766.0V503.4H1748.4zM1748.4 493.7H1766.0V496.9H1748.4zM1748.4 484.0H1766.0V487.2H1748.4zM1766.0 484.0H1783.6V487.2H1766.0zM1783.6 496.9H1801.1V500.2H1783.6zM1783.6 490.5H1801.1V493.7H1783.6zM1783.6 487.2H1801.1V490.5H1783.6zM1783.6 484.0H1801.1V487.2H1783.6zM1801.1 496.9H1818.7V500.2H1801.1zM1801.1 490.5H1818.7V493.7H1801.1zM1801.1 487.2H1818.7V490.5H1801.1zM1801.1 484.0H1818.7V487.2H1801.1zM1818.7 513.2H1836.3V516.4H1818.7zM1818.7 490.5H1836.3V493.7H1818.7zM1818.7 484.0H1836.3V487.2H1818.7zM1836.3 513.2H1853.8V516.4H1836.3zM1836.3 490.5H1853.8V493.7H1836.3zM1836.3 484.0H1853.8V487.2H1836.3zM1853.8 513.2H1871.4V516.4H1853.8zM1853.8 490.5H1871.4V493.7H1853.8zM1853.8 484.0H1871.4V487.2H1853.8zM1871.4 509.9H1889.0V513.2H1871.4zM1871.4 496.9H1889.0V500.2H1871.4zM1871.4 484.0H1889.0V487.2H1871.4zM1889.0 503.4H1906.5V506.6H1889.0zM1889.0 493.7H1906.5V496.9H1889.0zM1889.0 484.0H1906.5V487.2H1889.0zM1906.5 503.4H1924.1V506.6H1906.5zM1906.5 493.7H1924.1V496.9H1906.5zM1906.5 484.0H1924.1V487.2H1906.5zM1924.1 503.4H1941.7V506.6H1924.1zM1924.1 493.7H1941.7V496.9H1924.1zM1924.1 484.0H1941.7V487.2H1924.1zM1941.7 503.4H1959.3V506.6H1941.7zM1941.7 493.7H1959.3V496.9H1941.7zM1941.7 484.0H1959.3V487.2H1941.7zM1959.3 503.4H1976.8V506.6H1959.3zM1959.3 493.7H1976.8V496.9H1959.3zM1959.3 484.0H1976.8V487.2H1959.3zM1976.8 509.9H1994.4V513.2H1976.8zM1976.8 503.4H1994.4V506.6H1976.8zM1976.8 500.2H1994.4V503.4H1976.8zM1976.8 490.5H1994.4V493.7H1976.8zM1976.8 487.2H1994.4V490.5H1976.8zM1976.8 484.0H1994.4V487.2H1976.8zM1994.4 500.2H2012.0V503.4H1994.4zM1994.4 484.0H2012.0V487.2H1994.4zM2012.0 516.4H2029.5V519.7H2012.0zM2012.0 509.9H2029.5V513.2H2012.0zM2012.0 484.0H2029.5V487.2H2012.0zM2029.5 509.9H2047.1V513.2H2029.5zM2047.1 509.9H2064.7V513.2H2047.1zM2064.7 509.9H2082.2V513.2H2064.7zM2064.7 506.6H2082.2V509.9H2064.7zM2064.7 484.0H2082.2V487.2H2064.7zM2082.2 509.9H2099.8V513.2H2082.2zM2082.2 506.6H2099.8V509.9H2082.2zM2082.2 484.0H2099.8V487.2H2082.2zM2099.8 513.2H2117.4V516.4H2099.8zM2099.8 509.9H2117.4V513.2H2099.8zM2099.8 503.4H2117.4V506.6H2099.8zM2117.4 513.2H2135.0V516.4H2117.4zM2117.4 509.9H2135.0V513.2H2117.4zM2117.4 503.4H2135.0V506.6H2117.4zM2135.0 513.2H2152.5V516.4H2135.0zM2135.0 509.9H2152.5V513.2H2135.0zM2135.0 503.4H2152.5V506.6H2135.0zM2152.5 513.2H2170.1V516.4H2152.5zM2152.5 509.9H2170.1V513.2H2152.5zM2152.5 503.4H2170.1V506.6H2152.5zM2170.1 513.2H2187.7V516.4H2170.1zM2170.1 503.4H2187.7V506.6H2170.1zM2170.1 484.0H2187.7V487.2H2170.1zM2187.7 513.2H2205.2V516.4H2187.7zM2187.7 503.4H2205.2V506.6H2187.7zM2187.7 484.0H2205.2V487.2H2187.7zM2205.2 513.2H2222.8V516.4H2205.2zM2205.2 503.4H2222.8V506.6H2205.2zM2205.2 484.0H2222.8V487.2H2205.2zM2222.8 513.2H2240.4V516.4H2222.8zM2222.8 503.4H2240.4V506.6H2222.8zM2222.8 500.2H2240.4V503.4H2222.8zM2222.8 490.5H2240.4V493.7H2222.8zM2222.8 484.0H2240.4V487.2H2222.8zM2240.4 500.2H2257.9V503.4H2240.4zM2257.9 500.2H2275.5V503.4H2257.9zM2363.4 513.2H2380.9V516.4H2363.4zM2380.9 513.2H2398.5V516.4H2380.9zM2398.5 513.2H2416.1V516.4H2398.5zM2451.2 513.2H2468.8V516.4H2451.2zM2468.8 513.2H2486.3V516.4H2468.8zM2486.3 513.2H2503.9V516.4H2486.3zM2503.9 516.0H2521.5V519.0H2503.9z"/><path fill="#6ccb5a" d="M1484.9 513.2H1502.5V516.4H1484.9zM1502.5 516.4H1520.0V519.7H1502.5zM1590.3 516.4H1607.9V519.7H1590.3zM1590.3 503.4H1607.9V506.6H1590.3zM1607.9 516.4H1625.4V519.7H1607.9zM1607.9 509.9H1625.4V513.2H1607.9zM1625.4 516.4H1643.0V519.7H1625.4zM1625.4 513.2H1643.0V516.4H1625.4zM1643.0 516.4H1660.6V519.7H1643.0zM1643.0 513.2H1660.6V516.4H1643.0zM1660.6 516.4H1678.1V519.7H1660.6zM1660.6 513.2H1678.1V516.4H1660.6zM1678.1 516.4H1695.7V519.7H1678.1zM1678.1 513.2H1695.7V516.4H1678.1zM1695.7 516.4H1713.3V519.7H1695.7zM1695.7 513.2H1713.3V516.4H1695.7zM1713.3 516.4H1730.9V519.7H1713.3zM1730.9 513.2H1748.4V516.4H1730.9zM1748.4 516.4H1766.0V519.7H1748.4zM1748.4 513.2H1766.0V516.4H1748.4zM1766.0 516.4H1783.6V519.7H1766.0zM1766.0 513.2H1783.6V516.4H1766.0zM1766.0 503.4H1783.6V506.6H1766.0zM1783.6 513.2H1801.1V516.4H1783.6zM1801.1 513.2H1818.7V516.4H1801.1zM1871.4 516.4H1889.0V519.7H1871.4zM1871.4 513.2H1889.0V516.4H1871.4zM1889.0 516.4H1906.5V519.7H1889.0zM1889.0 513.2H1906.5V516.4H1889.0zM1906.5 516.4H1924.1V519.7H1906.5zM1906.5 513.2H1924.1V516.4H1906.5zM1924.1 516.4H1941.7V519.7H1924.1zM1924.1 513.2H1941.7V516.4H1924.1zM1941.7 516.4H1959.3V519.7H1941.7zM1941.7 513.2H1959.3V516.4H1941.7zM1959.3 516.4H1976.8V519.7H1959.3zM1959.3 513.2H1976.8V516.4H1959.3zM1976.8 516.4H1994.4V519.7H1976.8zM1976.8 513.2H1994.4V516.4H1976.8zM1994.4 516.4H2012.0V519.7H1994.4zM1994.4 513.2H2012.0V516.4H1994.4zM1994.4 509.9H2012.0V513.2H1994.4zM2012.0 513.2H2029.5V516.4H2012.0zM2029.5 516.4H2047.1V519.7H2029.5zM2029.5 513.2H2047.1V516.4H2029.5zM2047.1 516.4H2064.7V519.7H2047.1zM2047.1 513.2H2064.7V516.4H2047.1zM2064.7 516.4H2082.2V519.7H2064.7zM2064.7 513.2H2082.2V516.4H2064.7zM2064.7 503.4H2082.2V506.6H2064.7zM2082.2 516.4H2099.8V519.7H2082.2zM2082.2 513.2H2099.8V516.4H2082.2zM2082.2 503.4H2099.8V506.6H2082.2zM2099.8 516.4H2117.4V519.7H2099.8zM2117.4 516.4H2135.0V519.7H2117.4zM2135.0 516.4H2152.5V519.7H2135.0zM2152.5 516.4H2170.1V519.7H2152.5zM2222.8 516.4H2240.4V519.7H2222.8zM2380.9 516.4H2398.5V519.7H2380.9zM2416.1 513.2H2433.6V516.4H2416.1zM2433.6 513.2H2451.2V516.4H2433.6z"/><path fill="#b2dc2e" d="M1484.9 519.7H1502.5V523.0H1484.9zM1484.9 516.4H1502.5V519.7H1484.9zM1730.9 516.4H1748.4V519.7H1730.9zM1783.6 516.4H1801.1V519.7H1783.6zM1801.1 516.4H1818.7V519.7H1801.1zM1818.7 516.4H1836.3V519.7H1818.7zM1836.3 516.4H1853.8V519.7H1836.3zM1853.8 516.4H1871.4V519.7H1853.8zM2170.1 516.4H2187.7V519.7H2170.1zM2187.7 516.4H2205.2V519.7H2187.7zM2205.2 516.4H2222.8V519.7H2205.2zM2240.4 516.4H2257.9V519.7H2240.4zM2257.9 516.4H2275.5V519.7H2257.9zM2275.5 516.4H2293.1V519.7H2275.5zM2293.1 516.4H2310.6V519.7H2293.1zM2398.5 516.4H2416.1V519.7H2398.5zM2451.2 516.4H2468.8V519.7H2451.2zM2468.8 516.4H2486.3V519.7H2468.8zM2486.3 516.4H2503.9V519.7H2486.3z"/><path fill="#fde725" d="M1080.8 519.7H1098.4V523.0H1080.8zM1080.8 516.4H1098.4V519.7H1080.8zM1098.4 519.7H1115.9V523.0H1098.4zM1098.4 516.4H1115.9V519.7H1098.4zM1115.9 519.7H1133.5V523.0H1115.9zM1115.9 516.4H1133.5V519.7H1115.9zM1133.5 519.7H1151.1V523.0H1133.5zM1133.5 516.4H1151.1V519.7H1133.5zM1151.1 519.7H1168.6V523.0H1151.1zM1151.1 516.4H1168.6V519.7H1151.1zM1168.6 519.7H1186.2V523.0H1168.6zM1168.6 516.4H1186.2V519.7H1168.6zM1186.2 519.7H1203.8V523.0H1186.2zM1186.2 516.4H1203.8V519.7H1186.2zM1203.8 519.7H1221.3V523.0H1203.8zM1203.8 516.4H1221.3V519.7H1203.8zM1221.3 519.7H1238.9V523.0H1221.3zM1221.3 516.4H1238.9V519.7H1221.3zM1238.9 519.7H1256.5V523.0H1238.9zM1238.9 516.4H1256.5V519.7H1238.9zM1256.5 519.7H1274.0V523.0H1256.5zM1256.5 516.4H1274.0V519.7H1256.5zM1274.0 519.7H1291.6V523.0H1274.0zM1274.0 516.4H1291.6V519.7H1274.0zM1291.6 519.7H1309.2V523.0H1291.6zM1291.6 516.4H1309.2V519.7H1291.6zM1309.2 519.7H1326.8V523.0H1309.2zM1309.2 516.4H1326.8V519.7H1309.2zM1326.8 519.7H1344.3V523.0H1326.8zM1326.8 516.4H1344.3V519.7H1326.8zM1344.3 519.7H1361.9V523.0H1344.3zM1344.3 516.4H1361.9V519.7H1344.3zM1361.9 519.7H1379.5V523.0H1361.9zM1361.9 516.4H1379.5V519.7H1361.9zM1379.5 519.7H1397.0V523.0H1379.5zM1379.5 516.4H1397.0V519.7H1379.5zM1397.0 519.7H1414.6V523.0H1397.0zM1397.0 516.4H1414.6V519.7H1397.0zM1414.6 519.7H1432.2V523.0H1414.6zM1414.6 516.4H1432.2V519.7H1414.6zM1432.2 519.7H1449.7V523.0H1432.2zM1432.2 516.4H1449.7V519.7H1432.2zM1449.7 519.7H1467.3V523.0H1449.7zM1449.7 516.4H1467.3V519.7H1449.7zM1467.3 519.7H1484.9V523.0H1467.3zM1467.3 516.4H1484.9V519.7H1467.3zM1502.5 519.7H1520.0V523.0H1502.5zM1520.0 519.7H1537.6V523.0H1520.0zM1537.6 519.7H1555.2V523.0H1537.6zM1555.2 519.7H1572.7V523.0H1555.2zM1572.7 519.7H1590.3V523.0H1572.7zM1590.3 519.7H1607.9V523.0H1590.3zM1607.9 519.7H1625.4V523.0H1607.9zM1625.4 519.7H1643.0V523.0H1625.4zM1643.0 519.7H1660.6V523.0H1643.0zM1660.6 519.7H1678.1V523.0H1660.6zM1678.1 519.7H1695.7V523.0H1678.1zM1695.7 519.7H1713.3V523.0H1695.7zM1713.3 519.7H1730.9V523.0H1713.3zM1730.9 519.7H1748.4V523.0H1730.9zM1748.4 519.7H1766.0V523.0H1748.4zM1766.0 519.7H1783.6V523.0H1766.0zM1783.6 519.7H1801.1V523.0H1783.6zM1801.1 519.7H1818.7V523.0H1801.1zM1818.7 519.7H1836.3V523.0H1818.7zM1836.3 519.7H1853.8V523.0H1836.3zM1853.8 519.7H1871.4V523.0H1853.8zM1871.4 519.7H1889.0V523.0H1871.4zM1889.0 519.7H1906.5V523.0H1889.0zM1906.5 519.7H1924.1V523.0H1906.5zM1924.1 519.7H1941.7V523.0H1924.1zM1941.7 519.7H1959.3V523.0H1941.7zM1959.3 519.7H1976.8V523.0H1959.3zM1976.8 519.7H1994.4V523.0H1976.8zM1994.4 519.7H2012.0V523.0H1994.4zM2012.0 519.7H2029.5V523.0H2012.0zM2029.5 519.7H2047.1V523.0H2029.5zM2047.1 519.7H2064.7V523.0H2047.1zM2064.7 519.7H2082.2V523.0H2064.7zM2082.2 519.7H2099.8V523.0H2082.2zM2099.8 519.7H2117.4V523.0H2099.8zM2117.4 519.7H2135.0V523.0H2117.4zM2135.0 519.7H2152.5V523.0H2135.0zM2152.5 519.7H2170.1V523.0H2152.5zM2170.1 519.7H2187.7V523.0H2170.1zM2187.7 519.7H2205.2V523.0H2187.7zM2205.2 519.7H2222.8V523.0H2205.2zM2222.8 519.7H2240.4V523.0H2222.8zM2240.4 519.7H2257.9V523.0H2240.4zM2257.9 519.7H2275.5V523.0H2257.9zM2275.5 519.7H2293.1V523.0H2275.5zM2293.1 519.7H2310.6V523.0H2293.1zM2310.6 519.7H2328.2V523.0H2310.6zM2310.6 516.4H2328.2V519.7H2310.6zM2328.2 519.7H2345.8V523.0H2328.2zM2328.2 516.4H2345.8V519.7H2328.2zM2345.8 519.7H2363.4V523.0H2345.8zM2345.8 516.4H2363.4V519.7H2345.8zM2363.4 519.7H2380.9V523.0H2363.4zM2363.4 516.4H2380.9V519.7H2363.4zM2380.9 519.7H2398.5V523.0H2380.9zM2398.5 519.7H2416.1V523.0H2398.5zM2416.1 519.7H2433.6V523.0H2416.1zM2416.1 516.4H2433.6V519.7H2416.1zM2433.6 519.7H2451.2V523.0H2433.6zM2433.6 516.4H2451.2V519.7H2433.6zM2451.2 519.7H2468.8V523.0H2451.2zM2468.8 519.7H2486.3V523.0H2468.8zM2486.3 519.7H2503.9V523.0H2486.3zM2503.9 519.0H2521.5V523.0H2503.9zM2521.5 519.2H2539.0V523.0H2521.5zM2539.0 519.2H2556.6V523.0H2539.0zM2556.6 519.2H2574.2V523.0H2556.6zM2574.2 519.2H2591.8V523.0H2574.2zM2591.8 519.2H2609.3V523.0H2591.8zM2609.3 519.2H2626.9V523.0H2609.3zM2626.9 519.2H2644.5V523.0H2626.9zM2644.5 519.2H2662.0V523.0H2644.5zM2662.0 519.2H2679.6V523.0H2662.0zM2679.6 519.2H2697.2V523.0H2679.6zM2697.2 519.2H2714.7V523.0H2697.2zM2714.7 519.2H2732.3V523.0H2714.7zM2732.3 519.2H2749.9V523.0H2732.3zM2749.9 519.2H2767.5V523.0H2749.9zM2767.5 519.2H2785.0V523.0H2767.5zM2785.0 519.2H2802.6V523.0H2785.0zM2802.6 519.2H2820.2V523.0H2802.6zM2820.2 519.2H2837.7V523.0H2820.2zM2837.7 519.2H2855.3V523.0H2837.7zM2855.3 519.2H2872.9V523.0H2855.3zM2872.9 519.2H2890.4V523.0H2872.9zM2890.4 519.2H2908.0V523.0H2890.4zM2908.0 519.2H2925.6V523.0H2908.0zM2925.6 519.2H2943.1V523.0H2925.6zM2943.1 519.2H2960.7V523.0H2943.1zM2960.7 519.2H2978.3V523.0H2960.7zM2978.3 519.2H2995.9V523.0H2978.3zM2995.9 519.2H3013.4V523.0H2995.9zM3013.4 519.2H3031.0V523.0H3013.4zM3031.0 519.2H3048.6V523.0H3031.0zM3048.6 519.2H3066.1V523.0H3048.6zM3066.1 519.2H3083.7V523.0H3066.1zM3083.7 519.2H3101.3V523.0H3083.7zM3101.3 519.2H3118.8V523.0H3101.3zM3118.8 519.2H3136.4V523.0H3118.8zM3136.4 519.2H3154.0V523.0H3136.4zM3154.0 519.2H3171.5V523.0H3154.0zM3171.5 519.2H3189.1V523.0H3171.5zM3189.1 519.2H3206.7V523.0H3189.1zM3206.7 519.2H3224.3V523.0H3206.7zM3224.3 519.2H3241.8V523.0H3224.3zM3241.8 519.2H3259.4V523.0H3241.8zM3259.4 519.2H3277.0V523.0H3259.4zM3277.0 519.2H3294.5V523.0H3277.0zM3294.5 519.2H3312.1V523.0H3294.5zM3312.1 519.2H3329.7V523.0H3312.1zM3329.7 519.2H3347.2V523.0H3329.7zM3347.2 519.2H3364.8V523.0H3347.2zM3364.8 519.2H3382.4V523.0H3364.8zM3382.4 519.2H3400.0V523.0H3382.4zM3400.0 519.2H3417.5V523.0H3400.0zM3417.5 519.2H3435.1V523.0H3417.5zM3435.1 519.2H3452.7V523.0H3435.1zM3452.7 519.2H3470.2V523.0H3452.7zM3470.2 519.2H3487.8V523.0H3470.2zM3487.8 519.2H3505.4V523.0H3487.8zM3505.4 519.2H3522.9V523.0H3505.4zM3522.9 519.2H3540.5V523.0H3522.9zM3540.5 519.2H3558.1V523.0H3540.5zM3558.1 519.2H3575.6V523.0H3558.1zM3575.6 519.2H3593.2V523.0H3575.6zM3593.2 519.2H3602.0V523.0H3593.2z"/><path d="M1080.8 473V523M1098.4 473V523M1115.9 473V523M1133.5 473V523M1151.1 473V523M1168.6 473V523M1186.2 473V523M1203.8 473V523M1221.3 473V523M1238.9 473V523M1256.5 473V523M1274.0 473V523M1291.6 473V523M1309.2 473V523M1326.8 473V523M1344.3 473V523M1361.9 473V523M1379.5 473V523M1397.0 473V523M1414.6 473V523M1432.2 473V523M1449.7 473V523M1467.3 473V523M1484.9 473V523M1502.5 473V523M1520.0 473V523M1537.6 473V523M1555.2 473V523M1572.7 473V523M1590.3 473V523M1607.9 473V523M1625.4 473V523M1643.0 473V523M1660.6 473V523M1678.1 473V523M1695.7 473V523M1713.3 473V523M1730.9 473V523M1748.4 473V523M1766.0 473V523M1783.6 473V523M1801.1 473V523M1818.7 473V523M1836.3 473V523M1853.8 473V523M1871.4 473V523M1889.0 473V523M1906.5 473V523M1924.1 473V523M1941.7 473V523M1959.3 473V523M1976.8 473V523M1994.4 473V523M2012.0 473V523M2029.5 473V523M2047.1 473V523M2064.7 473V523M2082.2 473V523M2099.8 473V523M2117.4 473V523M2135.0 473V523M2152.5 473V523M2170.1 473V523M2187.7 473V523M2205.2 473V523M2222.8 473V523M2240.4 473V523M2257.9 473V523M2275.5 473V523M2293.1 473V523M2310.6 473V523M2328.2 473V523M2345.8 473V523M2363.4 473V523M2380.9 473V523M2398.5 473V523M2416.1 473V523M2433.6 473V523M2451.2 473V523M2468.8 473V523M2486.3 473V523M2503.9 473V523" stroke="#0c0e13" stroke-width="1" opacity=".36" fill="none"/><path d="M1080.8 506.6H2503.9M1080.8 490.5H2503.9" stroke="#0c0e13" stroke-width="1.2" fill="none"/><path d="M1177.4 238V523M1282.8 238V523M1388.2 238V523M1493.7 238V523M1599.1 238V523M1704.5 238V523M1809.9 238V523M1915.3 238V523M2020.8 238V523M2126.2 238V523M2231.6 238V523M2337.0 238V523M2442.4 238V523M2547.8 238V523M2653.2 238V523M2758.7 238V523M2864.1 238V523M2969.5 238V523M3074.9 238V523M3180.3 238V523M3285.8 238V523M3391.2 238V523M3496.6 238V523M3602.0 238V523M1072.0 247H3602.0M1072.0 339.2H3602.0M1072.0 431.3H3602.0" stroke="#62646e" stroke-opacity=".55" stroke-width="2" stroke-dasharray="3 3" fill="none"/><path d="M1072.0 524H3602.0" stroke="#8f9198" stroke-width="1.6" stroke-dasharray="3 3" fill="none"/><path d="M1072.0 239V524" stroke="#77787c" stroke-width="2" fill="none"/><rect x="1072.0" y="238" width="4" height="4" fill="#50fa7b"/><path d="M1072.0 526V542M1177.4 526V542M1282.8 526V542M1388.2 526V542M1493.7 526V542M1599.1 526V542M1704.5 526V542M1809.9 526V542M1915.3 526V542M2020.8 526V542M2126.2 526V542M2231.6 526V542M2337.0 526V542M2442.4 526V542M2547.8 526V542M2653.2 526V542M2758.7 526V542M2864.1 526V542M2969.5 526V542M3074.9 526V542M3180.3 526V542M3285.8 526V542M3391.2 526V542M3496.6 526V542M3602.0 526V542M1050 247H1071M1050 339.2H1071M1050 431.3H1071M1050 524H1071" stroke="#16181e" stroke-width="2" fill="none"/><g font-family='"Liberation Mono", monospace' font-size="24" fill="#7e7e81"><text x="1042" y="253" text-anchor="end">600</text><text x="1042" y="345.2" text-anchor="end">400</text><text x="1042" y="437.3" text-anchor="end">200</text><text x="1042" y="529.5" text-anchor="end">0</text><text x="1072.0" y="572.5" text-anchor="middle">10:00pm</text><text x="1177.4" y="572.5" text-anchor="middle">10:30pm</text><text x="1282.8" y="572.5" text-anchor="middle">11:00pm</text><text x="1388.2" y="572.5" text-anchor="middle">11:30pm</text><text x="1493.7" y="572.5" text-anchor="middle">12:00am</text><text x="1599.1" y="572.5" text-anchor="middle">12:30am</text><text x="1704.5" y="572.5" text-anchor="middle">1:00am</text><text x="1809.9" y="572.5" text-anchor="middle">1:30am</text><text x="1915.3" y="572.5" text-anchor="middle">2:00am</text><text x="2020.8" y="572.5" text-anchor="middle">2:30am</text><text x="2126.2" y="572.5" text-anchor="middle">3:00am</text><text x="2231.6" y="572.5" text-anchor="middle">3:30am</text><text x="2337.0" y="572.5" text-anchor="middle">4:00am</text><text x="2442.4" y="572.5" text-anchor="middle">4:30am</text><text x="2547.8" y="572.5" text-anchor="middle">5:00am</text><text x="2653.2" y="572.5" text-anchor="middle">5:30am</text><text x="2758.7" y="572.5" text-anchor="middle">6:00am</text><text x="2864.1" y="572.5" text-anchor="middle">6:30am</text><text x="2969.5" y="572.5" text-anchor="middle">7:00am</text><text x="3074.9" y="572.5" text-anchor="middle">7:30am</text><text x="3180.3" y="572.5" text-anchor="middle">8:00am</text><text x="3285.8" y="572.5" text-anchor="middle">8:30am</text><text x="3391.2" y="572.5" text-anchor="middle">9:00am</text><text x="3496.6" y="572.5" text-anchor="middle">9:30am</text><text x="3602.0" y="572.5" text-anchor="middle">10:00am</text><text x="1072.0" y="608.5" text-anchor="middle">9/14/25</text><text x="1493.7" y="608.5" text-anchor="middle">9/15</text></g></svg></main></div><div id="frame"></div></body></html>
